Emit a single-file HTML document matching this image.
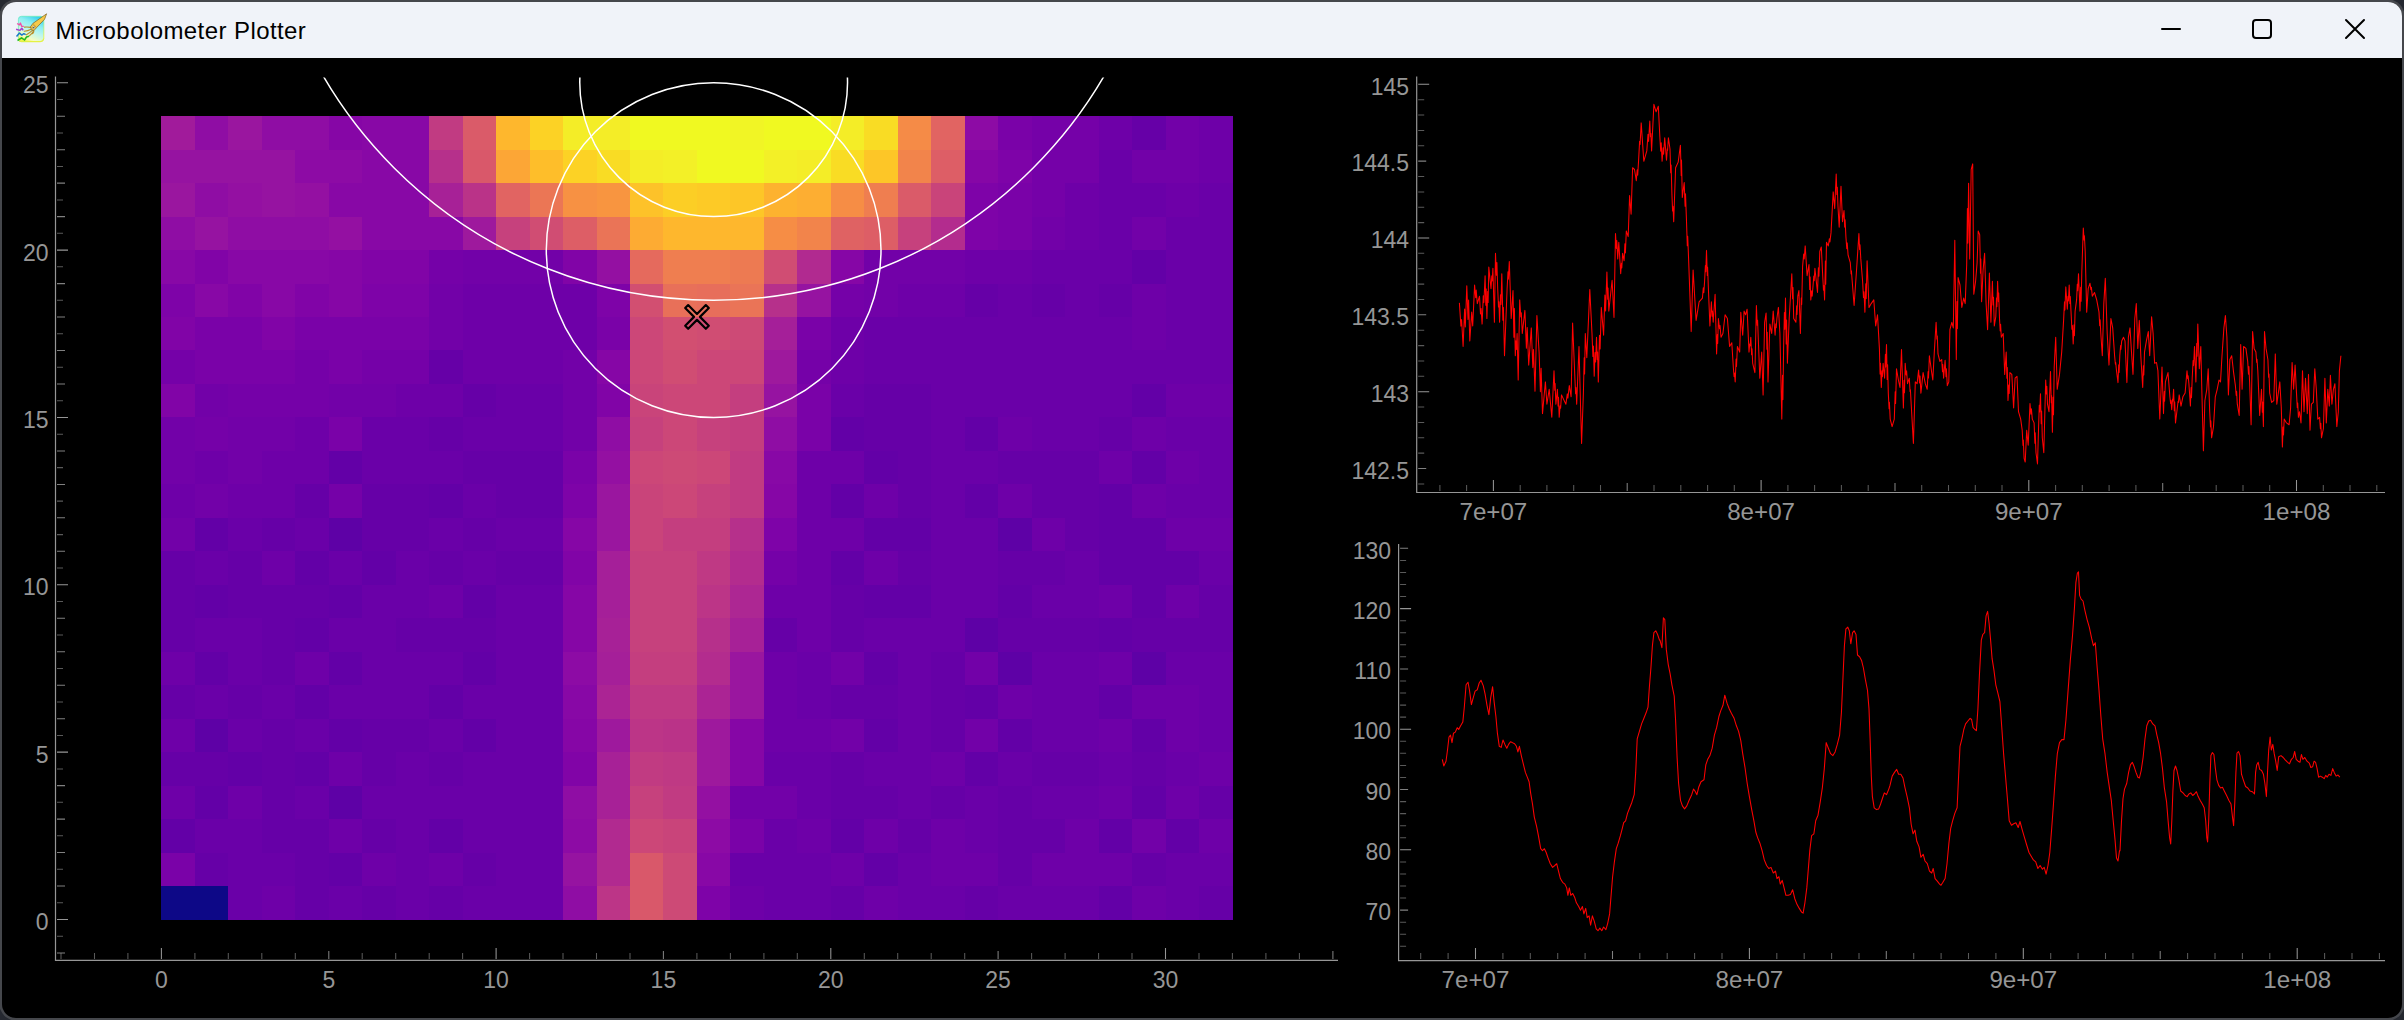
<!DOCTYPE html>
<html><head><meta charset="utf-8"><title>Microbolometer Plotter</title>
<style>
html,body{margin:0;padding:0}
body{width:2404px;height:1020px;overflow:hidden;background:#45474c;position:relative;font-family:"Liberation Sans",sans-serif}
.corner{position:absolute;width:11px;height:11px;background:#252830}
#win{position:absolute;left:2px;top:2px;width:2400px;height:1016px;border-radius:14px;background:#000;overflow:hidden;box-shadow:0 0 0 2.5px #45474c}
#title{position:absolute;left:0;top:0;width:2400px;height:56px;background:#f0f3f9}
#title .t{position:absolute;left:53.6px;top:-0.4px;height:56px;line-height:57px;font-size:24px;color:#000;white-space:nowrap;letter-spacing:0.42px}
svg{position:absolute;left:0;top:0}
svg text{font-family:"Liberation Sans",sans-serif;font-size:23px;fill:#969696}
</style></head><body>
<div class="corner" style="left:0;top:0"></div><div class="corner" style="right:0;top:0"></div>
<div class="corner" style="left:0;bottom:0"></div><div class="corner" style="right:0;bottom:0"></div>
<div id="win"><div id="title"><div class="t">Microbolometer Plotter</div></div></div>

<svg width="2404" height="1020" viewBox="0 0 2404 1020">
<defs><linearGradient id="ig" x1="0.75" y1="0" x2="0.3" y2="1"><stop offset="0" stop-color="#30cfec"/><stop offset="0.3" stop-color="#8deef2"/><stop offset="0.55" stop-color="#b9f6f0"/><stop offset="0.85" stop-color="#f6fcc4"/><stop offset="1" stop-color="#f0f64a"/></linearGradient>
<linearGradient id="ib" x1="0" y1="0" x2="0.6" y2="1"><stop offset="0" stop-color="#5fe9c8"/><stop offset="0.6" stop-color="#8ef0a0"/><stop offset="1" stop-color="#e6f23a"/></linearGradient></defs>
<g>
<rect x="18.4" y="16.3" width="25.4" height="25.4" rx="3.2" fill="url(#ig)" stroke="url(#ib)" stroke-width="0.8"/>
<path d="M18.6 40.6Q19 41.6 21 41.6H40Q43.4 41.6 43.6 38.5" fill="none" stroke="#e4f03a" stroke-width="0.9"/>
<path d="M24.5 27.1Q28 26.8 30.6 27.4M24.3 31.2Q28 31 30.6 29.6M26.4 34.8Q30 32.6 32.4 30.4M29.3 35.9Q32 33.6 33.4 31.2M32.7 33.6Q33.8 32.4 33.9 30.8" stroke="#b98f2a" stroke-width="1.15" fill="none" stroke-linecap="round"/>
<path d="M46.6 13.8L32.9 23.4L30.6 26.6L31.2 29.6L33.9 30.6L36.6 27.6L44.6 19.2Z" fill="#f7c948" stroke="#7d6220" stroke-width="0.7" stroke-linejoin="round"/>
<path d="M33 23.6L36.4 27.4" stroke="#9a7a28" stroke-width="0.5"/>
<ellipse cx="33.6" cy="27.4" rx="1.15" ry="1.35" transform="rotate(30 33.600 27.400)" fill="#f4f4f4" stroke="#6b5518" stroke-width="0.4"/>
<circle cx="33.500" cy="27.500" r="0.600" fill="#444"/>
<path d="M17.1 23.5L19.5 24.9L20.4 23.1L21.800 26.400L23.800 26.400" stroke="#f050a8" stroke-width="1.4" fill="none" stroke-linejoin="round"/>
<path d="M16.1 29.200L19.800 30.400L21.800 28.200L23.200 30.400" stroke="#a040d0" stroke-width="1.5" fill="none" stroke-linejoin="round"/>
<path d="M16.500 36.400L19.500 33.100L21.800 35.100L23.800 33.700L25.700 34.700" stroke="#1878c8" stroke-width="1.5" fill="none" stroke-linejoin="round"/>
<path d="M17.500 40.500L21.600 37.800L24.500 40L26.500 37L28.900 36.200" stroke="#20b820" stroke-width="1.5" fill="none" stroke-linejoin="round"/>
</g>

<g stroke="#000" stroke-width="2" fill="none" stroke-linecap="round"><path d="M2162 29H2180"/><rect x="2253" y="20" width="18" height="18" rx="3"/><path d="M2346 20L2364 38M2364 20L2346 38"/></g>
<g shape-rendering="crispEdges">
<rect x="161.40" y="116.20" width="33.77" height="33.77" fill="#a11b9b"/>
<rect x="194.87" y="116.20" width="33.77" height="33.77" fill="#8f0da4"/>
<rect x="228.34" y="116.20" width="33.77" height="33.77" fill="#9a169f"/>
<rect x="261.81" y="116.20" width="67.24" height="33.77" fill="#8f0da4"/>
<rect x="328.75" y="116.20" width="33.77" height="33.77" fill="#8606a6"/>
<rect x="362.22" y="116.20" width="67.24" height="33.77" fill="#8808a6"/>
<rect x="429.16" y="116.20" width="33.77" height="33.77" fill="#c13b82"/>
<rect x="462.63" y="116.20" width="33.77" height="33.77" fill="#da5b69"/>
<rect x="496.10" y="116.20" width="33.77" height="33.77" fill="#feb72d"/>
<rect x="529.57" y="116.20" width="33.77" height="33.77" fill="#fcd225"/>
<rect x="563.04" y="116.20" width="67.24" height="33.77" fill="#f4ed27"/>
<rect x="629.98" y="116.20" width="100.71" height="33.77" fill="#f0f921"/>
<rect x="730.39" y="116.20" width="33.77" height="33.77" fill="#f1f525"/>
<rect x="763.86" y="116.20" width="67.24" height="33.77" fill="#f0f921"/>
<rect x="830.80" y="116.20" width="33.77" height="33.77" fill="#f4ed27"/>
<rect x="864.27" y="116.20" width="33.77" height="33.77" fill="#f9dc24"/>
<rect x="897.74" y="116.20" width="33.77" height="33.77" fill="#f58b47"/>
<rect x="931.21" y="116.20" width="33.77" height="33.77" fill="#e16462"/>
<rect x="964.68" y="116.20" width="33.77" height="33.77" fill="#8d0ba5"/>
<rect x="998.15" y="116.20" width="33.77" height="33.77" fill="#7a02a8"/>
<rect x="1031.62" y="116.20" width="67.24" height="33.77" fill="#7501a8"/>
<rect x="1098.56" y="116.20" width="33.77" height="33.77" fill="#6e00a8"/>
<rect x="1132.03" y="116.20" width="33.77" height="33.77" fill="#6600a7"/>
<rect x="1165.50" y="116.20" width="33.77" height="33.77" fill="#7201a8"/>
<rect x="1198.97" y="116.20" width="33.77" height="33.77" fill="#6e00a8"/>
<rect x="161.40" y="149.67" width="134.18" height="33.77" fill="#9613a1"/>
<rect x="295.28" y="149.67" width="67.24" height="33.77" fill="#8d0ba5"/>
<rect x="362.22" y="149.67" width="67.24" height="33.77" fill="#8808a6"/>
<rect x="429.16" y="149.67" width="33.77" height="33.77" fill="#b6308b"/>
<rect x="462.63" y="149.67" width="33.77" height="33.77" fill="#d9586a"/>
<rect x="496.10" y="149.67" width="33.77" height="33.77" fill="#fca636"/>
<rect x="529.57" y="149.67" width="33.77" height="33.77" fill="#febe2a"/>
<rect x="563.04" y="149.67" width="33.77" height="33.77" fill="#fcd225"/>
<rect x="596.51" y="149.67" width="33.77" height="33.77" fill="#f9dc24"/>
<rect x="629.98" y="149.67" width="33.77" height="33.77" fill="#f4ed27"/>
<rect x="663.45" y="149.67" width="33.77" height="33.77" fill="#f3f027"/>
<rect x="696.92" y="149.67" width="67.24" height="33.77" fill="#f0f921"/>
<rect x="763.86" y="149.67" width="33.77" height="33.77" fill="#f3f027"/>
<rect x="797.33" y="149.67" width="33.77" height="33.77" fill="#f4ed27"/>
<rect x="830.80" y="149.67" width="33.77" height="33.77" fill="#f9dc24"/>
<rect x="864.27" y="149.67" width="33.77" height="33.77" fill="#fdc627"/>
<rect x="897.74" y="149.67" width="33.77" height="33.77" fill="#f2844b"/>
<rect x="931.21" y="149.67" width="33.77" height="33.77" fill="#dd5e66"/>
<rect x="964.68" y="149.67" width="33.77" height="33.77" fill="#8606a6"/>
<rect x="998.15" y="149.67" width="33.77" height="33.77" fill="#7e03a8"/>
<rect x="1031.62" y="149.67" width="67.24" height="33.77" fill="#7501a8"/>
<rect x="1098.56" y="149.67" width="33.77" height="33.77" fill="#6a00a8"/>
<rect x="1132.03" y="149.67" width="67.24" height="33.77" fill="#7201a8"/>
<rect x="1198.97" y="149.67" width="33.77" height="33.77" fill="#6e00a8"/>
<rect x="161.40" y="183.14" width="33.77" height="33.77" fill="#9a169f"/>
<rect x="194.87" y="183.14" width="33.77" height="33.77" fill="#8f0da4"/>
<rect x="228.34" y="183.14" width="33.77" height="33.77" fill="#9410a2"/>
<rect x="261.81" y="183.14" width="33.77" height="33.77" fill="#9613a1"/>
<rect x="295.28" y="183.14" width="33.77" height="33.77" fill="#9410a2"/>
<rect x="328.75" y="183.14" width="100.71" height="33.77" fill="#8808a6"/>
<rect x="429.16" y="183.14" width="33.77" height="33.77" fill="#a72197"/>
<rect x="462.63" y="183.14" width="33.77" height="33.77" fill="#ba3388"/>
<rect x="496.10" y="183.14" width="33.77" height="33.77" fill="#e16462"/>
<rect x="529.57" y="183.14" width="33.77" height="33.77" fill="#eb7655"/>
<rect x="563.04" y="183.14" width="33.77" height="33.77" fill="#f79143"/>
<rect x="596.51" y="183.14" width="33.77" height="33.77" fill="#f89540"/>
<rect x="629.98" y="183.14" width="33.77" height="33.77" fill="#fdc229"/>
<rect x="663.45" y="183.14" width="33.77" height="33.77" fill="#fcce25"/>
<rect x="696.92" y="183.14" width="33.77" height="33.77" fill="#fdca26"/>
<rect x="730.39" y="183.14" width="33.77" height="33.77" fill="#fdc627"/>
<rect x="763.86" y="183.14" width="33.77" height="33.77" fill="#fdb22f"/>
<rect x="797.33" y="183.14" width="33.77" height="33.77" fill="#fdae32"/>
<rect x="830.80" y="183.14" width="33.77" height="33.77" fill="#f68d45"/>
<rect x="864.27" y="183.14" width="33.77" height="33.77" fill="#ef7e50"/>
<rect x="897.74" y="183.14" width="33.77" height="33.77" fill="#da5b69"/>
<rect x="931.21" y="183.14" width="33.77" height="33.77" fill="#c9447a"/>
<rect x="964.68" y="183.14" width="33.77" height="33.77" fill="#7e03a8"/>
<rect x="998.15" y="183.14" width="33.77" height="33.77" fill="#7a02a8"/>
<rect x="1031.62" y="183.14" width="33.77" height="33.77" fill="#7501a8"/>
<rect x="1065.09" y="183.14" width="33.77" height="33.77" fill="#6e00a8"/>
<rect x="1098.56" y="183.14" width="67.24" height="33.77" fill="#6a00a8"/>
<rect x="1165.50" y="183.14" width="33.77" height="33.77" fill="#6e00a8"/>
<rect x="1198.97" y="183.14" width="33.77" height="33.77" fill="#6a00a8"/>
<rect x="161.40" y="216.61" width="33.77" height="33.77" fill="#8f0da4"/>
<rect x="194.87" y="216.61" width="33.77" height="33.77" fill="#9613a1"/>
<rect x="228.34" y="216.61" width="100.71" height="33.77" fill="#8f0da4"/>
<rect x="328.75" y="216.61" width="33.77" height="33.77" fill="#9410a2"/>
<rect x="362.22" y="216.61" width="100.71" height="33.77" fill="#8808a6"/>
<rect x="462.63" y="216.61" width="33.77" height="33.77" fill="#9e199d"/>
<rect x="496.10" y="216.61" width="33.77" height="33.77" fill="#c6417d"/>
<rect x="529.57" y="216.61" width="33.77" height="33.77" fill="#d04d73"/>
<rect x="563.04" y="216.61" width="33.77" height="33.77" fill="#dd5e66"/>
<rect x="596.51" y="216.61" width="33.77" height="33.77" fill="#ea7457"/>
<rect x="629.98" y="216.61" width="33.77" height="33.77" fill="#fdab33"/>
<rect x="663.45" y="216.61" width="100.71" height="33.77" fill="#feb72d"/>
<rect x="763.86" y="216.61" width="33.77" height="33.77" fill="#f68d45"/>
<rect x="797.33" y="216.61" width="33.77" height="33.77" fill="#f2844b"/>
<rect x="830.80" y="216.61" width="33.77" height="33.77" fill="#df6263"/>
<rect x="864.27" y="216.61" width="33.77" height="33.77" fill="#dd5e66"/>
<rect x="897.74" y="216.61" width="33.77" height="33.77" fill="#c6417d"/>
<rect x="931.21" y="216.61" width="33.77" height="33.77" fill="#b32c8e"/>
<rect x="964.68" y="216.61" width="33.77" height="33.77" fill="#7e03a8"/>
<rect x="998.15" y="216.61" width="33.77" height="33.77" fill="#7a02a8"/>
<rect x="1031.62" y="216.61" width="33.77" height="33.77" fill="#7201a8"/>
<rect x="1065.09" y="216.61" width="33.77" height="33.77" fill="#6e00a8"/>
<rect x="1098.56" y="216.61" width="33.77" height="33.77" fill="#6a00a8"/>
<rect x="1132.03" y="216.61" width="33.77" height="33.77" fill="#7201a8"/>
<rect x="1165.50" y="216.61" width="67.24" height="33.77" fill="#6a00a8"/>
<rect x="161.40" y="250.08" width="33.77" height="33.77" fill="#8808a6"/>
<rect x="194.87" y="250.08" width="33.77" height="33.77" fill="#8104a7"/>
<rect x="228.34" y="250.08" width="100.71" height="33.77" fill="#8808a6"/>
<rect x="328.75" y="250.08" width="33.77" height="33.77" fill="#8606a6"/>
<rect x="362.22" y="250.08" width="67.24" height="33.77" fill="#8104a7"/>
<rect x="429.16" y="250.08" width="33.77" height="33.77" fill="#7501a8"/>
<rect x="462.63" y="250.08" width="100.71" height="33.77" fill="#7201a8"/>
<rect x="563.04" y="250.08" width="33.77" height="33.77" fill="#8104a7"/>
<rect x="596.51" y="250.08" width="33.77" height="33.77" fill="#9410a2"/>
<rect x="629.98" y="250.08" width="33.77" height="33.77" fill="#e56a5d"/>
<rect x="663.45" y="250.08" width="67.24" height="33.77" fill="#ef7e50"/>
<rect x="730.39" y="250.08" width="33.77" height="33.77" fill="#ed7a52"/>
<rect x="763.86" y="250.08" width="33.77" height="33.77" fill="#d04d73"/>
<rect x="797.33" y="250.08" width="33.77" height="33.77" fill="#b12a90"/>
<rect x="830.80" y="250.08" width="33.77" height="33.77" fill="#8606a6"/>
<rect x="864.27" y="250.08" width="100.71" height="33.77" fill="#7201a8"/>
<rect x="964.68" y="250.08" width="67.24" height="33.77" fill="#6e00a8"/>
<rect x="1031.62" y="250.08" width="100.71" height="33.77" fill="#6a00a8"/>
<rect x="1132.03" y="250.08" width="33.77" height="33.77" fill="#6300a7"/>
<rect x="1165.50" y="250.08" width="67.24" height="33.77" fill="#6a00a8"/>
<rect x="161.40" y="283.55" width="33.77" height="33.77" fill="#7e03a8"/>
<rect x="194.87" y="283.55" width="33.77" height="33.77" fill="#8808a6"/>
<rect x="228.34" y="283.55" width="33.77" height="33.77" fill="#8104a7"/>
<rect x="261.81" y="283.55" width="33.77" height="33.77" fill="#8808a6"/>
<rect x="295.28" y="283.55" width="33.77" height="33.77" fill="#8104a7"/>
<rect x="328.75" y="283.55" width="33.77" height="33.77" fill="#8606a6"/>
<rect x="362.22" y="283.55" width="67.24" height="33.77" fill="#7e03a8"/>
<rect x="429.16" y="283.55" width="33.77" height="33.77" fill="#7201a8"/>
<rect x="462.63" y="283.55" width="134.18" height="33.77" fill="#6e00a8"/>
<rect x="596.51" y="283.55" width="33.77" height="33.77" fill="#7e03a8"/>
<rect x="629.98" y="283.55" width="33.77" height="33.77" fill="#d24f71"/>
<rect x="663.45" y="283.55" width="33.77" height="33.77" fill="#e87059"/>
<rect x="696.92" y="283.55" width="33.77" height="33.77" fill="#e76e5b"/>
<rect x="730.39" y="283.55" width="33.77" height="33.77" fill="#ea7457"/>
<rect x="763.86" y="283.55" width="33.77" height="33.77" fill="#b6308b"/>
<rect x="797.33" y="283.55" width="33.77" height="33.77" fill="#9613a1"/>
<rect x="830.80" y="283.55" width="33.77" height="33.77" fill="#7501a8"/>
<rect x="864.27" y="283.55" width="33.77" height="33.77" fill="#7201a8"/>
<rect x="897.74" y="283.55" width="67.24" height="33.77" fill="#6e00a8"/>
<rect x="964.68" y="283.55" width="33.77" height="33.77" fill="#6600a7"/>
<rect x="998.15" y="283.55" width="33.77" height="33.77" fill="#6a00a8"/>
<rect x="1031.62" y="283.55" width="33.77" height="33.77" fill="#6600a7"/>
<rect x="1065.09" y="283.55" width="33.77" height="33.77" fill="#6a00a8"/>
<rect x="1098.56" y="283.55" width="33.77" height="33.77" fill="#6600a7"/>
<rect x="1132.03" y="283.55" width="33.77" height="33.77" fill="#6e00a8"/>
<rect x="1165.50" y="283.55" width="67.24" height="33.77" fill="#6a00a8"/>
<rect x="161.40" y="317.02" width="33.77" height="33.77" fill="#8104a7"/>
<rect x="194.87" y="317.02" width="67.24" height="33.77" fill="#7a02a8"/>
<rect x="261.81" y="317.02" width="33.77" height="33.77" fill="#8104a7"/>
<rect x="295.28" y="317.02" width="134.18" height="33.77" fill="#7a02a8"/>
<rect x="429.16" y="317.02" width="33.77" height="33.77" fill="#7201a8"/>
<rect x="462.63" y="317.02" width="134.18" height="33.77" fill="#6e00a8"/>
<rect x="596.51" y="317.02" width="33.77" height="33.77" fill="#7a02a8"/>
<rect x="629.98" y="317.02" width="33.77" height="33.77" fill="#cc4778"/>
<rect x="663.45" y="317.02" width="33.77" height="33.77" fill="#d24f71"/>
<rect x="696.92" y="317.02" width="33.77" height="33.77" fill="#d04d73"/>
<rect x="730.39" y="317.02" width="33.77" height="33.77" fill="#cd4a76"/>
<rect x="763.86" y="317.02" width="33.77" height="33.77" fill="#a51f99"/>
<rect x="797.33" y="317.02" width="33.77" height="33.77" fill="#7a02a8"/>
<rect x="830.80" y="317.02" width="33.77" height="33.77" fill="#6e00a8"/>
<rect x="864.27" y="317.02" width="268.06" height="33.77" fill="#6a00a8"/>
<rect x="1132.03" y="317.02" width="33.77" height="33.77" fill="#6e00a8"/>
<rect x="1165.50" y="317.02" width="67.24" height="33.77" fill="#6a00a8"/>
<rect x="161.40" y="350.49" width="33.77" height="33.77" fill="#7501a8"/>
<rect x="194.87" y="350.49" width="100.71" height="33.77" fill="#7a02a8"/>
<rect x="295.28" y="350.49" width="33.77" height="33.77" fill="#7501a8"/>
<rect x="328.75" y="350.49" width="33.77" height="33.77" fill="#7a02a8"/>
<rect x="362.22" y="350.49" width="67.24" height="33.77" fill="#7501a8"/>
<rect x="429.16" y="350.49" width="33.77" height="33.77" fill="#6600a7"/>
<rect x="462.63" y="350.49" width="100.71" height="33.77" fill="#6e00a8"/>
<rect x="563.04" y="350.49" width="33.77" height="33.77" fill="#7201a8"/>
<rect x="596.51" y="350.49" width="33.77" height="33.77" fill="#8606a6"/>
<rect x="629.98" y="350.49" width="33.77" height="33.77" fill="#cc4778"/>
<rect x="663.45" y="350.49" width="33.77" height="33.77" fill="#d04d73"/>
<rect x="696.92" y="350.49" width="67.24" height="33.77" fill="#cc4778"/>
<rect x="763.86" y="350.49" width="33.77" height="33.77" fill="#9e199d"/>
<rect x="797.33" y="350.49" width="33.77" height="33.77" fill="#7501a8"/>
<rect x="830.80" y="350.49" width="33.77" height="33.77" fill="#6e00a8"/>
<rect x="864.27" y="350.49" width="368.47" height="33.77" fill="#6a00a8"/>
<rect x="161.40" y="383.96" width="33.77" height="33.77" fill="#8104a7"/>
<rect x="194.87" y="383.96" width="33.77" height="33.77" fill="#7201a8"/>
<rect x="228.34" y="383.96" width="100.71" height="33.77" fill="#7501a8"/>
<rect x="328.75" y="383.96" width="67.24" height="33.77" fill="#7201a8"/>
<rect x="395.69" y="383.96" width="67.24" height="33.77" fill="#6e00a8"/>
<rect x="462.63" y="383.96" width="33.77" height="33.77" fill="#6600a7"/>
<rect x="496.10" y="383.96" width="67.24" height="33.77" fill="#6a00a8"/>
<rect x="563.04" y="383.96" width="33.77" height="33.77" fill="#7201a8"/>
<rect x="596.51" y="383.96" width="33.77" height="33.77" fill="#8104a7"/>
<rect x="629.98" y="383.96" width="33.77" height="33.77" fill="#c9447a"/>
<rect x="663.45" y="383.96" width="67.24" height="33.77" fill="#cc4778"/>
<rect x="730.39" y="383.96" width="33.77" height="33.77" fill="#c43e7f"/>
<rect x="763.86" y="383.96" width="33.77" height="33.77" fill="#9613a1"/>
<rect x="797.33" y="383.96" width="33.77" height="33.77" fill="#7a02a8"/>
<rect x="830.80" y="383.96" width="33.77" height="33.77" fill="#6a00a8"/>
<rect x="864.27" y="383.96" width="67.24" height="33.77" fill="#6600a7"/>
<rect x="931.21" y="383.96" width="201.12" height="33.77" fill="#6a00a8"/>
<rect x="1132.03" y="383.96" width="33.77" height="33.77" fill="#6300a7"/>
<rect x="1165.50" y="383.96" width="67.24" height="33.77" fill="#6e00a8"/>
<rect x="161.40" y="417.43" width="33.77" height="33.77" fill="#7201a8"/>
<rect x="194.87" y="417.43" width="33.77" height="33.77" fill="#7501a8"/>
<rect x="228.34" y="417.43" width="67.24" height="33.77" fill="#7201a8"/>
<rect x="295.28" y="417.43" width="33.77" height="33.77" fill="#6e00a8"/>
<rect x="328.75" y="417.43" width="33.77" height="33.77" fill="#7a02a8"/>
<rect x="362.22" y="417.43" width="67.24" height="33.77" fill="#6a00a8"/>
<rect x="429.16" y="417.43" width="33.77" height="33.77" fill="#6600a7"/>
<rect x="462.63" y="417.43" width="100.71" height="33.77" fill="#6a00a8"/>
<rect x="563.04" y="417.43" width="33.77" height="33.77" fill="#7201a8"/>
<rect x="596.51" y="417.43" width="33.77" height="33.77" fill="#8f0da4"/>
<rect x="629.98" y="417.43" width="33.77" height="33.77" fill="#c6417d"/>
<rect x="663.45" y="417.43" width="33.77" height="33.77" fill="#cc4778"/>
<rect x="696.92" y="417.43" width="33.77" height="33.77" fill="#c6417d"/>
<rect x="730.39" y="417.43" width="33.77" height="33.77" fill="#c43e7f"/>
<rect x="763.86" y="417.43" width="33.77" height="33.77" fill="#8f0da4"/>
<rect x="797.33" y="417.43" width="33.77" height="33.77" fill="#7a02a8"/>
<rect x="830.80" y="417.43" width="33.77" height="33.77" fill="#6300a7"/>
<rect x="864.27" y="417.43" width="67.24" height="33.77" fill="#6600a7"/>
<rect x="931.21" y="417.43" width="33.77" height="33.77" fill="#6a00a8"/>
<rect x="964.68" y="417.43" width="33.77" height="33.77" fill="#6300a7"/>
<rect x="998.15" y="417.43" width="33.77" height="33.77" fill="#6e00a8"/>
<rect x="1031.62" y="417.43" width="67.24" height="33.77" fill="#6a00a8"/>
<rect x="1098.56" y="417.43" width="33.77" height="33.77" fill="#6600a7"/>
<rect x="1132.03" y="417.43" width="33.77" height="33.77" fill="#6e00a8"/>
<rect x="1165.50" y="417.43" width="67.24" height="33.77" fill="#6a00a8"/>
<rect x="161.40" y="450.90" width="33.77" height="33.77" fill="#7201a8"/>
<rect x="194.87" y="450.90" width="33.77" height="33.77" fill="#6e00a8"/>
<rect x="228.34" y="450.90" width="33.77" height="33.77" fill="#7201a8"/>
<rect x="261.81" y="450.90" width="67.24" height="33.77" fill="#6e00a8"/>
<rect x="328.75" y="450.90" width="33.77" height="33.77" fill="#6300a7"/>
<rect x="362.22" y="450.90" width="100.71" height="33.77" fill="#6a00a8"/>
<rect x="462.63" y="450.90" width="100.71" height="33.77" fill="#6600a7"/>
<rect x="563.04" y="450.90" width="33.77" height="33.77" fill="#7a02a8"/>
<rect x="596.51" y="450.90" width="33.77" height="33.77" fill="#9410a2"/>
<rect x="629.98" y="450.90" width="33.77" height="33.77" fill="#cc4778"/>
<rect x="663.45" y="450.90" width="33.77" height="33.77" fill="#cd4a76"/>
<rect x="696.92" y="450.90" width="33.77" height="33.77" fill="#cc4778"/>
<rect x="730.39" y="450.90" width="33.77" height="33.77" fill="#c13b82"/>
<rect x="763.86" y="450.90" width="33.77" height="33.77" fill="#8808a6"/>
<rect x="797.33" y="450.90" width="67.24" height="33.77" fill="#6e00a8"/>
<rect x="864.27" y="450.90" width="33.77" height="33.77" fill="#6300a7"/>
<rect x="897.74" y="450.90" width="33.77" height="33.77" fill="#6600a7"/>
<rect x="931.21" y="450.90" width="67.24" height="33.77" fill="#6a00a8"/>
<rect x="998.15" y="450.90" width="100.71" height="33.77" fill="#6600a7"/>
<rect x="1098.56" y="450.90" width="33.77" height="33.77" fill="#6e00a8"/>
<rect x="1132.03" y="450.90" width="33.77" height="33.77" fill="#6300a7"/>
<rect x="1165.50" y="450.90" width="33.77" height="33.77" fill="#6e00a8"/>
<rect x="1198.97" y="450.90" width="33.77" height="33.77" fill="#6a00a8"/>
<rect x="161.40" y="484.37" width="33.77" height="33.77" fill="#6e00a8"/>
<rect x="194.87" y="484.37" width="33.77" height="33.77" fill="#7201a8"/>
<rect x="228.34" y="484.37" width="67.24" height="33.77" fill="#6e00a8"/>
<rect x="295.28" y="484.37" width="33.77" height="33.77" fill="#6600a7"/>
<rect x="328.75" y="484.37" width="33.77" height="33.77" fill="#7501a8"/>
<rect x="362.22" y="484.37" width="67.24" height="33.77" fill="#6600a7"/>
<rect x="429.16" y="484.37" width="33.77" height="33.77" fill="#6300a7"/>
<rect x="462.63" y="484.37" width="33.77" height="33.77" fill="#6a00a8"/>
<rect x="496.10" y="484.37" width="67.24" height="33.77" fill="#6600a7"/>
<rect x="563.04" y="484.37" width="33.77" height="33.77" fill="#7e03a8"/>
<rect x="596.51" y="484.37" width="33.77" height="33.77" fill="#9a169f"/>
<rect x="629.98" y="484.37" width="33.77" height="33.77" fill="#c9447a"/>
<rect x="663.45" y="484.37" width="33.77" height="33.77" fill="#cc4778"/>
<rect x="696.92" y="484.37" width="33.77" height="33.77" fill="#c6417d"/>
<rect x="730.39" y="484.37" width="33.77" height="33.77" fill="#c13b82"/>
<rect x="763.86" y="484.37" width="33.77" height="33.77" fill="#8606a6"/>
<rect x="797.33" y="484.37" width="33.77" height="33.77" fill="#6e00a8"/>
<rect x="830.80" y="484.37" width="33.77" height="33.77" fill="#6300a7"/>
<rect x="864.27" y="484.37" width="33.77" height="33.77" fill="#6e00a8"/>
<rect x="897.74" y="484.37" width="33.77" height="33.77" fill="#6600a7"/>
<rect x="931.21" y="484.37" width="33.77" height="33.77" fill="#6a00a8"/>
<rect x="964.68" y="484.37" width="33.77" height="33.77" fill="#6300a7"/>
<rect x="998.15" y="484.37" width="33.77" height="33.77" fill="#6e00a8"/>
<rect x="1031.62" y="484.37" width="67.24" height="33.77" fill="#6600a7"/>
<rect x="1098.56" y="484.37" width="33.77" height="33.77" fill="#6300a7"/>
<rect x="1132.03" y="484.37" width="33.77" height="33.77" fill="#6e00a8"/>
<rect x="1165.50" y="484.37" width="67.24" height="33.77" fill="#6a00a8"/>
<rect x="161.40" y="517.84" width="33.77" height="33.77" fill="#7201a8"/>
<rect x="194.87" y="517.84" width="33.77" height="33.77" fill="#6300a7"/>
<rect x="228.34" y="517.84" width="33.77" height="33.77" fill="#6a00a8"/>
<rect x="261.81" y="517.84" width="33.77" height="33.77" fill="#6600a7"/>
<rect x="295.28" y="517.84" width="33.77" height="33.77" fill="#6a00a8"/>
<rect x="328.75" y="517.84" width="33.77" height="33.77" fill="#5e01a6"/>
<rect x="362.22" y="517.84" width="67.24" height="33.77" fill="#6600a7"/>
<rect x="429.16" y="517.84" width="33.77" height="33.77" fill="#6a00a8"/>
<rect x="462.63" y="517.84" width="33.77" height="33.77" fill="#6600a7"/>
<rect x="496.10" y="517.84" width="67.24" height="33.77" fill="#6a00a8"/>
<rect x="563.04" y="517.84" width="33.77" height="33.77" fill="#8606a6"/>
<rect x="596.51" y="517.84" width="33.77" height="33.77" fill="#9a169f"/>
<rect x="629.98" y="517.84" width="33.77" height="33.77" fill="#c9447a"/>
<rect x="663.45" y="517.84" width="67.24" height="33.77" fill="#c43e7f"/>
<rect x="730.39" y="517.84" width="33.77" height="33.77" fill="#b6308b"/>
<rect x="763.86" y="517.84" width="33.77" height="33.77" fill="#7e03a8"/>
<rect x="797.33" y="517.84" width="67.24" height="33.77" fill="#6e00a8"/>
<rect x="864.27" y="517.84" width="67.24" height="33.77" fill="#6300a7"/>
<rect x="931.21" y="517.84" width="67.24" height="33.77" fill="#6a00a8"/>
<rect x="998.15" y="517.84" width="33.77" height="33.77" fill="#5e01a6"/>
<rect x="1031.62" y="517.84" width="33.77" height="33.77" fill="#6e00a8"/>
<rect x="1065.09" y="517.84" width="33.77" height="33.77" fill="#6600a7"/>
<rect x="1098.56" y="517.84" width="67.24" height="33.77" fill="#6300a7"/>
<rect x="1165.50" y="517.84" width="67.24" height="33.77" fill="#6e00a8"/>
<rect x="161.40" y="551.31" width="33.77" height="33.77" fill="#6600a7"/>
<rect x="194.87" y="551.31" width="33.77" height="33.77" fill="#6a00a8"/>
<rect x="228.34" y="551.31" width="33.77" height="33.77" fill="#6600a7"/>
<rect x="261.81" y="551.31" width="33.77" height="33.77" fill="#6e00a8"/>
<rect x="295.28" y="551.31" width="33.77" height="33.77" fill="#6300a7"/>
<rect x="328.75" y="551.31" width="33.77" height="33.77" fill="#6a00a8"/>
<rect x="362.22" y="551.31" width="33.77" height="33.77" fill="#6300a7"/>
<rect x="395.69" y="551.31" width="33.77" height="33.77" fill="#6a00a8"/>
<rect x="429.16" y="551.31" width="33.77" height="33.77" fill="#6600a7"/>
<rect x="462.63" y="551.31" width="33.77" height="33.77" fill="#6a00a8"/>
<rect x="496.10" y="551.31" width="67.24" height="33.77" fill="#6600a7"/>
<rect x="563.04" y="551.31" width="33.77" height="33.77" fill="#8104a7"/>
<rect x="596.51" y="551.31" width="33.77" height="33.77" fill="#a51f99"/>
<rect x="629.98" y="551.31" width="67.24" height="33.77" fill="#c6417d"/>
<rect x="696.92" y="551.31" width="33.77" height="33.77" fill="#bf3984"/>
<rect x="730.39" y="551.31" width="33.77" height="33.77" fill="#b32c8e"/>
<rect x="763.86" y="551.31" width="33.77" height="33.77" fill="#7501a8"/>
<rect x="797.33" y="551.31" width="33.77" height="33.77" fill="#6e00a8"/>
<rect x="830.80" y="551.31" width="33.77" height="33.77" fill="#6300a7"/>
<rect x="864.27" y="551.31" width="33.77" height="33.77" fill="#6e00a8"/>
<rect x="897.74" y="551.31" width="33.77" height="33.77" fill="#6600a7"/>
<rect x="931.21" y="551.31" width="67.24" height="33.77" fill="#6a00a8"/>
<rect x="998.15" y="551.31" width="67.24" height="33.77" fill="#6600a7"/>
<rect x="1065.09" y="551.31" width="33.77" height="33.77" fill="#6a00a8"/>
<rect x="1098.56" y="551.31" width="100.71" height="33.77" fill="#6300a7"/>
<rect x="1198.97" y="551.31" width="33.77" height="33.77" fill="#6a00a8"/>
<rect x="161.40" y="584.78" width="33.77" height="33.77" fill="#6600a7"/>
<rect x="194.87" y="584.78" width="33.77" height="33.77" fill="#6300a7"/>
<rect x="228.34" y="584.78" width="100.71" height="33.77" fill="#6600a7"/>
<rect x="328.75" y="584.78" width="33.77" height="33.77" fill="#6300a7"/>
<rect x="362.22" y="584.78" width="67.24" height="33.77" fill="#6a00a8"/>
<rect x="429.16" y="584.78" width="33.77" height="33.77" fill="#6e00a8"/>
<rect x="462.63" y="584.78" width="33.77" height="33.77" fill="#6300a7"/>
<rect x="496.10" y="584.78" width="67.24" height="33.77" fill="#6a00a8"/>
<rect x="563.04" y="584.78" width="33.77" height="33.77" fill="#8606a6"/>
<rect x="596.51" y="584.78" width="33.77" height="33.77" fill="#a51f99"/>
<rect x="629.98" y="584.78" width="67.24" height="33.77" fill="#c6417d"/>
<rect x="696.92" y="584.78" width="33.77" height="33.77" fill="#bc3587"/>
<rect x="730.39" y="584.78" width="33.77" height="33.77" fill="#ad2793"/>
<rect x="763.86" y="584.78" width="67.24" height="33.77" fill="#6e00a8"/>
<rect x="830.80" y="584.78" width="33.77" height="33.77" fill="#6600a7"/>
<rect x="864.27" y="584.78" width="67.24" height="33.77" fill="#6300a7"/>
<rect x="931.21" y="584.78" width="67.24" height="33.77" fill="#6a00a8"/>
<rect x="998.15" y="584.78" width="33.77" height="33.77" fill="#6300a7"/>
<rect x="1031.62" y="584.78" width="67.24" height="33.77" fill="#6a00a8"/>
<rect x="1098.56" y="584.78" width="33.77" height="33.77" fill="#6e00a8"/>
<rect x="1132.03" y="584.78" width="33.77" height="33.77" fill="#6300a7"/>
<rect x="1165.50" y="584.78" width="33.77" height="33.77" fill="#6e00a8"/>
<rect x="1198.97" y="584.78" width="33.77" height="33.77" fill="#6600a7"/>
<rect x="161.40" y="618.25" width="33.77" height="33.77" fill="#6600a7"/>
<rect x="194.87" y="618.25" width="67.24" height="33.77" fill="#6a00a8"/>
<rect x="261.81" y="618.25" width="33.77" height="33.77" fill="#6600a7"/>
<rect x="295.28" y="618.25" width="33.77" height="33.77" fill="#6300a7"/>
<rect x="328.75" y="618.25" width="67.24" height="33.77" fill="#6a00a8"/>
<rect x="395.69" y="618.25" width="100.71" height="33.77" fill="#6600a7"/>
<rect x="496.10" y="618.25" width="67.24" height="33.77" fill="#6a00a8"/>
<rect x="563.04" y="618.25" width="33.77" height="33.77" fill="#8606a6"/>
<rect x="596.51" y="618.25" width="33.77" height="33.77" fill="#a72197"/>
<rect x="629.98" y="618.25" width="67.24" height="33.77" fill="#c6417d"/>
<rect x="696.92" y="618.25" width="33.77" height="33.77" fill="#b6308b"/>
<rect x="730.39" y="618.25" width="33.77" height="33.77" fill="#a72197"/>
<rect x="763.86" y="618.25" width="33.77" height="33.77" fill="#6600a7"/>
<rect x="797.33" y="618.25" width="33.77" height="33.77" fill="#6e00a8"/>
<rect x="830.80" y="618.25" width="33.77" height="33.77" fill="#6600a7"/>
<rect x="864.27" y="618.25" width="100.71" height="33.77" fill="#6a00a8"/>
<rect x="964.68" y="618.25" width="33.77" height="33.77" fill="#5e01a6"/>
<rect x="998.15" y="618.25" width="100.71" height="33.77" fill="#6600a7"/>
<rect x="1098.56" y="618.25" width="33.77" height="33.77" fill="#6300a7"/>
<rect x="1132.03" y="618.25" width="100.71" height="33.77" fill="#6600a7"/>
<rect x="161.40" y="651.72" width="33.77" height="33.77" fill="#6e00a8"/>
<rect x="194.87" y="651.72" width="33.77" height="33.77" fill="#6300a7"/>
<rect x="228.34" y="651.72" width="33.77" height="33.77" fill="#6a00a8"/>
<rect x="261.81" y="651.72" width="33.77" height="33.77" fill="#6600a7"/>
<rect x="295.28" y="651.72" width="33.77" height="33.77" fill="#6e00a8"/>
<rect x="328.75" y="651.72" width="33.77" height="33.77" fill="#6300a7"/>
<rect x="362.22" y="651.72" width="100.71" height="33.77" fill="#6a00a8"/>
<rect x="462.63" y="651.72" width="33.77" height="33.77" fill="#6300a7"/>
<rect x="496.10" y="651.72" width="67.24" height="33.77" fill="#6a00a8"/>
<rect x="563.04" y="651.72" width="33.77" height="33.77" fill="#8d0ba5"/>
<rect x="596.51" y="651.72" width="33.77" height="33.77" fill="#a51f99"/>
<rect x="629.98" y="651.72" width="67.24" height="33.77" fill="#c43e7f"/>
<rect x="696.92" y="651.72" width="33.77" height="33.77" fill="#b32c8e"/>
<rect x="730.39" y="651.72" width="33.77" height="33.77" fill="#9a169f"/>
<rect x="763.86" y="651.72" width="33.77" height="33.77" fill="#6e00a8"/>
<rect x="797.33" y="651.72" width="33.77" height="33.77" fill="#6a00a8"/>
<rect x="830.80" y="651.72" width="33.77" height="33.77" fill="#7201a8"/>
<rect x="864.27" y="651.72" width="33.77" height="33.77" fill="#6300a7"/>
<rect x="897.74" y="651.72" width="33.77" height="33.77" fill="#6a00a8"/>
<rect x="931.21" y="651.72" width="33.77" height="33.77" fill="#6600a7"/>
<rect x="964.68" y="651.72" width="33.77" height="33.77" fill="#7201a8"/>
<rect x="998.15" y="651.72" width="33.77" height="33.77" fill="#5e01a6"/>
<rect x="1031.62" y="651.72" width="67.24" height="33.77" fill="#6a00a8"/>
<rect x="1098.56" y="651.72" width="33.77" height="33.77" fill="#6e00a8"/>
<rect x="1132.03" y="651.72" width="33.77" height="33.77" fill="#5e01a6"/>
<rect x="1165.50" y="651.72" width="67.24" height="33.77" fill="#6a00a8"/>
<rect x="161.40" y="685.19" width="33.77" height="33.77" fill="#6600a7"/>
<rect x="194.87" y="685.19" width="33.77" height="33.77" fill="#6a00a8"/>
<rect x="228.34" y="685.19" width="33.77" height="33.77" fill="#6600a7"/>
<rect x="261.81" y="685.19" width="33.77" height="33.77" fill="#6a00a8"/>
<rect x="295.28" y="685.19" width="33.77" height="33.77" fill="#6300a7"/>
<rect x="328.75" y="685.19" width="100.71" height="33.77" fill="#6a00a8"/>
<rect x="429.16" y="685.19" width="33.77" height="33.77" fill="#6300a7"/>
<rect x="462.63" y="685.19" width="100.71" height="33.77" fill="#6a00a8"/>
<rect x="563.04" y="685.19" width="33.77" height="33.77" fill="#8808a6"/>
<rect x="596.51" y="685.19" width="33.77" height="33.77" fill="#ab2494"/>
<rect x="629.98" y="685.19" width="67.24" height="33.77" fill="#bf3984"/>
<rect x="696.92" y="685.19" width="33.77" height="33.77" fill="#ab2494"/>
<rect x="730.39" y="685.19" width="33.77" height="33.77" fill="#9a169f"/>
<rect x="763.86" y="685.19" width="33.77" height="33.77" fill="#6e00a8"/>
<rect x="797.33" y="685.19" width="33.77" height="33.77" fill="#6a00a8"/>
<rect x="830.80" y="685.19" width="67.24" height="33.77" fill="#6600a7"/>
<rect x="897.74" y="685.19" width="33.77" height="33.77" fill="#6a00a8"/>
<rect x="931.21" y="685.19" width="33.77" height="33.77" fill="#6600a7"/>
<rect x="964.68" y="685.19" width="33.77" height="33.77" fill="#6300a7"/>
<rect x="998.15" y="685.19" width="33.77" height="33.77" fill="#6e00a8"/>
<rect x="1031.62" y="685.19" width="67.24" height="33.77" fill="#6a00a8"/>
<rect x="1098.56" y="685.19" width="33.77" height="33.77" fill="#6300a7"/>
<rect x="1132.03" y="685.19" width="67.24" height="33.77" fill="#6e00a8"/>
<rect x="1198.97" y="685.19" width="33.77" height="33.77" fill="#6a00a8"/>
<rect x="161.40" y="718.66" width="33.77" height="33.77" fill="#6e00a8"/>
<rect x="194.87" y="718.66" width="33.77" height="33.77" fill="#5e01a6"/>
<rect x="228.34" y="718.66" width="33.77" height="33.77" fill="#6a00a8"/>
<rect x="261.81" y="718.66" width="33.77" height="33.77" fill="#6600a7"/>
<rect x="295.28" y="718.66" width="33.77" height="33.77" fill="#6a00a8"/>
<rect x="328.75" y="718.66" width="33.77" height="33.77" fill="#6300a7"/>
<rect x="362.22" y="718.66" width="67.24" height="33.77" fill="#6600a7"/>
<rect x="429.16" y="718.66" width="33.77" height="33.77" fill="#6a00a8"/>
<rect x="462.63" y="718.66" width="33.77" height="33.77" fill="#6300a7"/>
<rect x="496.10" y="718.66" width="67.24" height="33.77" fill="#6a00a8"/>
<rect x="563.04" y="718.66" width="33.77" height="33.77" fill="#8606a6"/>
<rect x="596.51" y="718.66" width="33.77" height="33.77" fill="#9e199d"/>
<rect x="629.98" y="718.66" width="33.77" height="33.77" fill="#bc3587"/>
<rect x="663.45" y="718.66" width="33.77" height="33.77" fill="#ba3388"/>
<rect x="696.92" y="718.66" width="33.77" height="33.77" fill="#9e199d"/>
<rect x="730.39" y="718.66" width="33.77" height="33.77" fill="#8606a6"/>
<rect x="763.86" y="718.66" width="67.24" height="33.77" fill="#6e00a8"/>
<rect x="830.80" y="718.66" width="33.77" height="33.77" fill="#7201a8"/>
<rect x="864.27" y="718.66" width="33.77" height="33.77" fill="#6300a7"/>
<rect x="897.74" y="718.66" width="33.77" height="33.77" fill="#6a00a8"/>
<rect x="931.21" y="718.66" width="33.77" height="33.77" fill="#6600a7"/>
<rect x="964.68" y="718.66" width="33.77" height="33.77" fill="#7201a8"/>
<rect x="998.15" y="718.66" width="33.77" height="33.77" fill="#6300a7"/>
<rect x="1031.62" y="718.66" width="67.24" height="33.77" fill="#6a00a8"/>
<rect x="1098.56" y="718.66" width="33.77" height="33.77" fill="#6e00a8"/>
<rect x="1132.03" y="718.66" width="33.77" height="33.77" fill="#6300a7"/>
<rect x="1165.50" y="718.66" width="33.77" height="33.77" fill="#6e00a8"/>
<rect x="1198.97" y="718.66" width="33.77" height="33.77" fill="#6a00a8"/>
<rect x="161.40" y="752.13" width="67.24" height="33.77" fill="#6600a7"/>
<rect x="228.34" y="752.13" width="33.77" height="33.77" fill="#6300a7"/>
<rect x="261.81" y="752.13" width="33.77" height="33.77" fill="#6600a7"/>
<rect x="295.28" y="752.13" width="33.77" height="33.77" fill="#6300a7"/>
<rect x="328.75" y="752.13" width="33.77" height="33.77" fill="#6e00a8"/>
<rect x="362.22" y="752.13" width="33.77" height="33.77" fill="#6600a7"/>
<rect x="395.69" y="752.13" width="33.77" height="33.77" fill="#6a00a8"/>
<rect x="429.16" y="752.13" width="33.77" height="33.77" fill="#6600a7"/>
<rect x="462.63" y="752.13" width="100.71" height="33.77" fill="#6a00a8"/>
<rect x="563.04" y="752.13" width="33.77" height="33.77" fill="#8104a7"/>
<rect x="596.51" y="752.13" width="33.77" height="33.77" fill="#a72197"/>
<rect x="629.98" y="752.13" width="33.77" height="33.77" fill="#c13b82"/>
<rect x="663.45" y="752.13" width="33.77" height="33.77" fill="#bf3984"/>
<rect x="696.92" y="752.13" width="33.77" height="33.77" fill="#9e199d"/>
<rect x="730.39" y="752.13" width="33.77" height="33.77" fill="#8606a6"/>
<rect x="763.86" y="752.13" width="67.24" height="33.77" fill="#6a00a8"/>
<rect x="830.80" y="752.13" width="33.77" height="33.77" fill="#6600a7"/>
<rect x="864.27" y="752.13" width="67.24" height="33.77" fill="#6a00a8"/>
<rect x="931.21" y="752.13" width="33.77" height="33.77" fill="#6e00a8"/>
<rect x="964.68" y="752.13" width="33.77" height="33.77" fill="#6300a7"/>
<rect x="998.15" y="752.13" width="33.77" height="33.77" fill="#6a00a8"/>
<rect x="1031.62" y="752.13" width="67.24" height="33.77" fill="#6600a7"/>
<rect x="1098.56" y="752.13" width="33.77" height="33.77" fill="#6a00a8"/>
<rect x="1132.03" y="752.13" width="33.77" height="33.77" fill="#6600a7"/>
<rect x="1165.50" y="752.13" width="33.77" height="33.77" fill="#6a00a8"/>
<rect x="1198.97" y="752.13" width="33.77" height="33.77" fill="#6e00a8"/>
<rect x="161.40" y="785.60" width="33.77" height="33.77" fill="#6e00a8"/>
<rect x="194.87" y="785.60" width="33.77" height="33.77" fill="#6300a7"/>
<rect x="228.34" y="785.60" width="33.77" height="33.77" fill="#6e00a8"/>
<rect x="261.81" y="785.60" width="33.77" height="33.77" fill="#6600a7"/>
<rect x="295.28" y="785.60" width="33.77" height="33.77" fill="#6a00a8"/>
<rect x="328.75" y="785.60" width="33.77" height="33.77" fill="#5e01a6"/>
<rect x="362.22" y="785.60" width="201.12" height="33.77" fill="#6a00a8"/>
<rect x="563.04" y="785.60" width="33.77" height="33.77" fill="#8f0da4"/>
<rect x="596.51" y="785.60" width="33.77" height="33.77" fill="#a72197"/>
<rect x="629.98" y="785.60" width="33.77" height="33.77" fill="#c6417d"/>
<rect x="663.45" y="785.60" width="33.77" height="33.77" fill="#c13b82"/>
<rect x="696.92" y="785.60" width="33.77" height="33.77" fill="#9410a2"/>
<rect x="730.39" y="785.60" width="67.24" height="33.77" fill="#7201a8"/>
<rect x="797.33" y="785.60" width="33.77" height="33.77" fill="#6a00a8"/>
<rect x="830.80" y="785.60" width="67.24" height="33.77" fill="#6600a7"/>
<rect x="897.74" y="785.60" width="33.77" height="33.77" fill="#6a00a8"/>
<rect x="931.21" y="785.60" width="33.77" height="33.77" fill="#6600a7"/>
<rect x="964.68" y="785.60" width="33.77" height="33.77" fill="#6a00a8"/>
<rect x="998.15" y="785.60" width="33.77" height="33.77" fill="#6600a7"/>
<rect x="1031.62" y="785.60" width="67.24" height="33.77" fill="#6a00a8"/>
<rect x="1098.56" y="785.60" width="33.77" height="33.77" fill="#6e00a8"/>
<rect x="1132.03" y="785.60" width="33.77" height="33.77" fill="#6300a7"/>
<rect x="1165.50" y="785.60" width="33.77" height="33.77" fill="#6e00a8"/>
<rect x="1198.97" y="785.60" width="33.77" height="33.77" fill="#6600a7"/>
<rect x="161.40" y="819.07" width="33.77" height="33.77" fill="#6300a7"/>
<rect x="194.87" y="819.07" width="67.24" height="33.77" fill="#6a00a8"/>
<rect x="261.81" y="819.07" width="67.24" height="33.77" fill="#6600a7"/>
<rect x="328.75" y="819.07" width="33.77" height="33.77" fill="#6e00a8"/>
<rect x="362.22" y="819.07" width="33.77" height="33.77" fill="#6600a7"/>
<rect x="395.69" y="819.07" width="33.77" height="33.77" fill="#6a00a8"/>
<rect x="429.16" y="819.07" width="33.77" height="33.77" fill="#6300a7"/>
<rect x="462.63" y="819.07" width="100.71" height="33.77" fill="#6a00a8"/>
<rect x="563.04" y="819.07" width="33.77" height="33.77" fill="#8d0ba5"/>
<rect x="596.51" y="819.07" width="33.77" height="33.77" fill="#b12a90"/>
<rect x="629.98" y="819.07" width="33.77" height="33.77" fill="#cc4778"/>
<rect x="663.45" y="819.07" width="33.77" height="33.77" fill="#c9447a"/>
<rect x="696.92" y="819.07" width="33.77" height="33.77" fill="#8d0ba5"/>
<rect x="730.39" y="819.07" width="33.77" height="33.77" fill="#7a02a8"/>
<rect x="763.86" y="819.07" width="33.77" height="33.77" fill="#6a00a8"/>
<rect x="797.33" y="819.07" width="33.77" height="33.77" fill="#6e00a8"/>
<rect x="830.80" y="819.07" width="33.77" height="33.77" fill="#6300a7"/>
<rect x="864.27" y="819.07" width="33.77" height="33.77" fill="#6e00a8"/>
<rect x="897.74" y="819.07" width="33.77" height="33.77" fill="#6600a7"/>
<rect x="931.21" y="819.07" width="33.77" height="33.77" fill="#6e00a8"/>
<rect x="964.68" y="819.07" width="33.77" height="33.77" fill="#6a00a8"/>
<rect x="998.15" y="819.07" width="67.24" height="33.77" fill="#6600a7"/>
<rect x="1065.09" y="819.07" width="33.77" height="33.77" fill="#6e00a8"/>
<rect x="1098.56" y="819.07" width="33.77" height="33.77" fill="#6300a7"/>
<rect x="1132.03" y="819.07" width="33.77" height="33.77" fill="#7201a8"/>
<rect x="1165.50" y="819.07" width="33.77" height="33.77" fill="#6300a7"/>
<rect x="1198.97" y="819.07" width="33.77" height="33.77" fill="#6e00a8"/>
<rect x="161.40" y="852.54" width="33.77" height="33.77" fill="#7a02a8"/>
<rect x="194.87" y="852.54" width="33.77" height="33.77" fill="#6600a7"/>
<rect x="228.34" y="852.54" width="67.24" height="33.77" fill="#6a00a8"/>
<rect x="295.28" y="852.54" width="33.77" height="33.77" fill="#6600a7"/>
<rect x="328.75" y="852.54" width="33.77" height="33.77" fill="#6300a7"/>
<rect x="362.22" y="852.54" width="33.77" height="33.77" fill="#6e00a8"/>
<rect x="395.69" y="852.54" width="33.77" height="33.77" fill="#6a00a8"/>
<rect x="429.16" y="852.54" width="33.77" height="33.77" fill="#6e00a8"/>
<rect x="462.63" y="852.54" width="33.77" height="33.77" fill="#6600a7"/>
<rect x="496.10" y="852.54" width="67.24" height="33.77" fill="#6a00a8"/>
<rect x="563.04" y="852.54" width="33.77" height="33.77" fill="#9613a1"/>
<rect x="596.51" y="852.54" width="33.77" height="33.77" fill="#b12a90"/>
<rect x="629.98" y="852.54" width="33.77" height="33.77" fill="#d9586a"/>
<rect x="663.45" y="852.54" width="33.77" height="33.77" fill="#cd4a76"/>
<rect x="696.92" y="852.54" width="33.77" height="33.77" fill="#8808a6"/>
<rect x="730.39" y="852.54" width="100.71" height="33.77" fill="#6a00a8"/>
<rect x="830.80" y="852.54" width="33.77" height="33.77" fill="#6e00a8"/>
<rect x="864.27" y="852.54" width="33.77" height="33.77" fill="#6300a7"/>
<rect x="897.74" y="852.54" width="33.77" height="33.77" fill="#6a00a8"/>
<rect x="931.21" y="852.54" width="67.24" height="33.77" fill="#6e00a8"/>
<rect x="998.15" y="852.54" width="33.77" height="33.77" fill="#6600a7"/>
<rect x="1031.62" y="852.54" width="100.71" height="33.77" fill="#6e00a8"/>
<rect x="1132.03" y="852.54" width="33.77" height="33.77" fill="#6600a7"/>
<rect x="1165.50" y="852.54" width="67.24" height="33.77" fill="#6a00a8"/>
<rect x="161.40" y="886.01" width="67.24" height="33.77" fill="#0d0887"/>
<rect x="228.34" y="886.01" width="33.77" height="33.77" fill="#6a00a8"/>
<rect x="261.81" y="886.01" width="33.77" height="33.77" fill="#6e00a8"/>
<rect x="295.28" y="886.01" width="33.77" height="33.77" fill="#6600a7"/>
<rect x="328.75" y="886.01" width="33.77" height="33.77" fill="#6a00a8"/>
<rect x="362.22" y="886.01" width="33.77" height="33.77" fill="#6600a7"/>
<rect x="395.69" y="886.01" width="33.77" height="33.77" fill="#6a00a8"/>
<rect x="429.16" y="886.01" width="33.77" height="33.77" fill="#6600a7"/>
<rect x="462.63" y="886.01" width="100.71" height="33.77" fill="#6a00a8"/>
<rect x="563.04" y="886.01" width="33.77" height="33.77" fill="#8f0da4"/>
<rect x="596.51" y="886.01" width="33.77" height="33.77" fill="#bc3587"/>
<rect x="629.98" y="886.01" width="33.77" height="33.77" fill="#d9586a"/>
<rect x="663.45" y="886.01" width="33.77" height="33.77" fill="#cd4a76"/>
<rect x="696.92" y="886.01" width="33.77" height="33.77" fill="#7e03a8"/>
<rect x="730.39" y="886.01" width="33.77" height="33.77" fill="#6e00a8"/>
<rect x="763.86" y="886.01" width="67.24" height="33.77" fill="#6a00a8"/>
<rect x="830.80" y="886.01" width="33.77" height="33.77" fill="#6600a7"/>
<rect x="864.27" y="886.01" width="33.77" height="33.77" fill="#6e00a8"/>
<rect x="897.74" y="886.01" width="67.24" height="33.77" fill="#6a00a8"/>
<rect x="964.68" y="886.01" width="33.77" height="33.77" fill="#6600a7"/>
<rect x="998.15" y="886.01" width="100.71" height="33.77" fill="#6a00a8"/>
<rect x="1098.56" y="886.01" width="33.77" height="33.77" fill="#6300a7"/>
<rect x="1132.03" y="886.01" width="33.77" height="33.77" fill="#6e00a8"/>
<rect x="1165.50" y="886.01" width="33.77" height="33.77" fill="#6a00a8"/>
<rect x="1198.97" y="886.01" width="33.77" height="33.77" fill="#6600a7"/>
</g>
<defs><clipPath id="vc"><rect x="56" y="77.5" width="1282" height="883"/></clipPath></defs>
<g clip-path="url(#vc)" fill="none" stroke="#fff" stroke-width="1.5">
<circle cx="713.65" cy="250.08" r="167.35"/>
<circle cx="713.65" cy="82.73" r="133.88"/>
<circle cx="713.65" cy="-151.56" r="451.84"/>
</g>
<polygon transform="translate(697.0 316.9) rotate(45)" points="-14.6,-2.1 -2.1,-2.1 -2.1,-14.6 2.1,-14.6 2.1,-2.1 14.6,-2.1 14.6,2.1 2.1,2.1 2.1,14.6 -2.1,14.6 -2.1,2.1 -14.6,2.1" fill="none" stroke="#000" stroke-width="2.2" stroke-linejoin="round"/>
<g stroke="#969696" stroke-width="1.2" fill="none">
<path d="M55.5 76.5V960.4H1338.0"/>
</g>
<path stroke="#969696" stroke-width="1.05" stroke-opacity="1.00" fill="none" d="M161.4 958.9v-11.0M496.1 958.9v-11.0M830.8 958.9v-11.0M1165.5 958.9v-11.0M57.0 919.5h11.0M57.0 752.1h11.0M57.0 584.8h11.0M57.0 417.4h11.0M57.0 250.1h11.0M57.0 82.7h11.0"/>
<path stroke="#969696" stroke-width="1.05" stroke-opacity="0.85" fill="none" d="M328.8 958.9v-8.0M663.4 958.9v-8.0M998.1 958.9v-8.0M1332.9 958.9v-8.0M57.0 953.0h8.0M57.0 886.0h8.0M57.0 852.5h8.0M57.0 819.1h8.0M57.0 785.6h8.0M57.0 718.7h8.0M57.0 685.2h8.0M57.0 651.7h8.0M57.0 618.2h8.0M57.0 551.3h8.0M57.0 517.8h8.0M57.0 484.4h8.0M57.0 450.9h8.0M57.0 384.0h8.0M57.0 350.5h8.0M57.0 317.0h8.0M57.0 283.6h8.0M57.0 216.6h8.0M57.0 183.1h8.0M57.0 149.7h8.0M57.0 116.2h8.0"/>
<path stroke="#969696" stroke-width="1.05" stroke-opacity="0.60" fill="none" d="M61.0 958.9v-6.0M94.5 958.9v-6.0M127.9 958.9v-6.0M194.9 958.9v-6.0M228.3 958.9v-6.0M261.8 958.9v-6.0M295.3 958.9v-6.0M362.2 958.9v-6.0M395.7 958.9v-6.0M429.2 958.9v-6.0M462.6 958.9v-6.0M529.6 958.9v-6.0M563.0 958.9v-6.0M596.5 958.9v-6.0M630.0 958.9v-6.0M696.9 958.9v-6.0M730.4 958.9v-6.0M763.9 958.9v-6.0M797.3 958.9v-6.0M864.3 958.9v-6.0M897.7 958.9v-6.0M931.2 958.9v-6.0M964.7 958.9v-6.0M1031.6 958.9v-6.0M1065.1 958.9v-6.0M1098.6 958.9v-6.0M1132.0 958.9v-6.0M1199.0 958.9v-6.0M1232.4 958.9v-6.0M1265.9 958.9v-6.0M1299.4 958.9v-6.0M57.0 936.2h6.0M57.0 902.7h6.0M57.0 869.3h6.0M57.0 835.8h6.0M57.0 802.3h6.0M57.0 768.9h6.0M57.0 735.4h6.0M57.0 701.9h6.0M57.0 668.5h6.0M57.0 635.0h6.0M57.0 601.5h6.0M57.0 568.0h6.0M57.0 534.6h6.0M57.0 501.1h6.0M57.0 467.6h6.0M57.0 434.2h6.0M57.0 400.7h6.0M57.0 367.2h6.0M57.0 333.8h6.0M57.0 300.3h6.0M57.0 266.8h6.0M57.0 233.3h6.0M57.0 199.9h6.0M57.0 166.4h6.0M57.0 132.9h6.0M57.0 99.5h6.0"/>
<text transform="translate(161.4 988.3) scale(1.00 1.05)" text-anchor="middle">0</text>
<text transform="translate(328.8 988.3) scale(1.00 1.05)" text-anchor="middle">5</text>
<text transform="translate(496.1 988.3) scale(1.00 1.05)" text-anchor="middle">10</text>
<text transform="translate(663.4 988.3) scale(1.00 1.05)" text-anchor="middle">15</text>
<text transform="translate(830.8 988.3) scale(1.00 1.05)" text-anchor="middle">20</text>
<text transform="translate(998.1 988.3) scale(1.00 1.05)" text-anchor="middle">25</text>
<text transform="translate(1165.5 988.3) scale(1.00 1.05)" text-anchor="middle">30</text>
<text transform="translate(48.5 929.9) scale(1.00 1.05)" text-anchor="end">0</text>
<text transform="translate(48.5 762.5) scale(1.00 1.05)" text-anchor="end">5</text>
<text transform="translate(48.5 595.2) scale(1.00 1.05)" text-anchor="end">10</text>
<text transform="translate(48.5 427.8) scale(1.00 1.05)" text-anchor="end">15</text>
<text transform="translate(48.5 260.5) scale(1.00 1.05)" text-anchor="end">20</text>
<text transform="translate(48.5 93.1) scale(1.00 1.05)" text-anchor="end">25</text>
<g stroke="#969696" stroke-width="1.2" fill="none">
<path d="M1416.7 76.5V492.5H2385.0"/>
</g>
<path stroke="#969696" stroke-width="1.05" stroke-opacity="1.00" fill="none" d="M1493.4 491.0v-11.0M1761.1 491.0v-11.0M2028.8 491.0v-11.0M2296.5 491.0v-11.0M1418.2 84.3h11.0M1418.2 238.0h11.0M1418.2 391.7h11.0"/>
<path stroke="#969696" stroke-width="1.05" stroke-opacity="0.85" fill="none" d="M1627.2 491.0v-8.0M1895.0 491.0v-8.0M2162.7 491.0v-8.0M1418.2 161.1h8.0M1418.2 314.8h8.0M1418.2 468.5h8.0"/>
<path stroke="#969696" stroke-width="1.05" stroke-opacity="0.60" fill="none" d="M1439.9 491.0v-6.0M1466.6 491.0v-6.0M1520.2 491.0v-6.0M1546.9 491.0v-6.0M1573.7 491.0v-6.0M1600.5 491.0v-6.0M1654.0 491.0v-6.0M1680.8 491.0v-6.0M1707.6 491.0v-6.0M1734.3 491.0v-6.0M1787.9 491.0v-6.0M1814.6 491.0v-6.0M1841.4 491.0v-6.0M1868.2 491.0v-6.0M1921.7 491.0v-6.0M1948.5 491.0v-6.0M1975.3 491.0v-6.0M2002.0 491.0v-6.0M2055.6 491.0v-6.0M2082.3 491.0v-6.0M2109.1 491.0v-6.0M2135.9 491.0v-6.0M2189.4 491.0v-6.0M2216.2 491.0v-6.0M2243.0 491.0v-6.0M2269.7 491.0v-6.0M2323.3 491.0v-6.0M2350.0 491.0v-6.0M2376.8 491.0v-6.0M1418.2 99.7h6.0M1418.2 115.0h6.0M1418.2 130.4h6.0M1418.2 145.8h6.0M1418.2 176.5h6.0M1418.2 191.9h6.0M1418.2 207.2h6.0M1418.2 222.6h6.0M1418.2 253.3h6.0M1418.2 268.7h6.0M1418.2 284.1h6.0M1418.2 299.5h6.0M1418.2 330.2h6.0M1418.2 345.6h6.0M1418.2 360.9h6.0M1418.2 376.3h6.0M1418.2 407.0h6.0M1418.2 422.4h6.0M1418.2 437.8h6.0M1418.2 453.1h6.0M1418.2 483.9h6.0"/>
<text transform="translate(1493.4 520.3) scale(1.05 1.05)" text-anchor="middle">7e+07</text>
<text transform="translate(1761.1 520.3) scale(1.05 1.05)" text-anchor="middle">8e+07</text>
<text transform="translate(2028.8 520.3) scale(1.05 1.05)" text-anchor="middle">9e+07</text>
<text transform="translate(2296.5 520.3) scale(1.05 1.05)" text-anchor="middle">1e+08</text>
<text transform="translate(1409.0 94.5) scale(1.00 1.05)" text-anchor="end">145</text>
<text transform="translate(1409.0 171.3) scale(1.00 1.05)" text-anchor="end">144.5</text>
<text transform="translate(1409.0 248.2) scale(1.00 1.05)" text-anchor="end">144</text>
<text transform="translate(1409.0 325.0) scale(1.00 1.05)" text-anchor="end">143.5</text>
<text transform="translate(1409.0 401.9) scale(1.00 1.05)" text-anchor="end">143</text>
<text transform="translate(1409.0 478.7) scale(1.00 1.05)" text-anchor="end">142.5</text>
<g stroke="#969696" stroke-width="1.2" fill="none">
<path d="M1398.6 544.0V960.6H2385.0"/>
</g>
<path stroke="#969696" stroke-width="1.05" stroke-opacity="1.00" fill="none" d="M1475.5 959.1v-11.0M1749.4 959.1v-11.0M2023.3 959.1v-11.0M2297.2 959.1v-11.0M1400.1 608.6h11.0M1400.1 729.2h11.0M1400.1 849.8h11.0"/>
<path stroke="#969696" stroke-width="1.05" stroke-opacity="0.85" fill="none" d="M1612.5 959.1v-8.0M1886.3 959.1v-8.0M2160.2 959.1v-8.0M1400.1 548.3h8.0M1400.1 668.9h8.0M1400.1 789.5h8.0M1400.1 910.1h8.0"/>
<path stroke="#969696" stroke-width="1.05" stroke-opacity="0.60" fill="none" d="M1420.7 959.1v-6.0M1448.1 959.1v-6.0M1502.9 959.1v-6.0M1530.3 959.1v-6.0M1557.7 959.1v-6.0M1585.1 959.1v-6.0M1639.8 959.1v-6.0M1667.2 959.1v-6.0M1694.6 959.1v-6.0M1722.0 959.1v-6.0M1776.8 959.1v-6.0M1804.2 959.1v-6.0M1831.6 959.1v-6.0M1859.0 959.1v-6.0M1913.7 959.1v-6.0M1941.1 959.1v-6.0M1968.5 959.1v-6.0M1995.9 959.1v-6.0M2050.7 959.1v-6.0M2078.1 959.1v-6.0M2105.5 959.1v-6.0M2132.9 959.1v-6.0M2187.6 959.1v-6.0M2215.0 959.1v-6.0M2242.4 959.1v-6.0M2269.8 959.1v-6.0M2324.6 959.1v-6.0M2352.0 959.1v-6.0M2379.4 959.1v-6.0M1400.1 560.4h6.0M1400.1 572.4h6.0M1400.1 584.5h6.0M1400.1 596.5h6.0M1400.1 620.7h6.0M1400.1 632.7h6.0M1400.1 644.8h6.0M1400.1 656.8h6.0M1400.1 681.0h6.0M1400.1 693.0h6.0M1400.1 705.1h6.0M1400.1 717.1h6.0M1400.1 741.3h6.0M1400.1 753.3h6.0M1400.1 765.4h6.0M1400.1 777.4h6.0M1400.1 801.6h6.0M1400.1 813.6h6.0M1400.1 825.7h6.0M1400.1 837.7h6.0M1400.1 861.9h6.0M1400.1 873.9h6.0M1400.1 886.0h6.0M1400.1 898.0h6.0M1400.1 922.2h6.0M1400.1 934.2h6.0M1400.1 946.3h6.0"/>
<text transform="translate(1475.5 988.3) scale(1.05 1.05)" text-anchor="middle">7e+07</text>
<text transform="translate(1749.4 988.3) scale(1.05 1.05)" text-anchor="middle">8e+07</text>
<text transform="translate(2023.3 988.3) scale(1.05 1.05)" text-anchor="middle">9e+07</text>
<text transform="translate(2297.2 988.3) scale(1.05 1.05)" text-anchor="middle">1e+08</text>
<text transform="translate(1391.0 920.3) scale(1.00 1.05)" text-anchor="end">70</text>
<text transform="translate(1391.0 860.0) scale(1.00 1.05)" text-anchor="end">80</text>
<text transform="translate(1391.0 799.7) scale(1.00 1.05)" text-anchor="end">90</text>
<text transform="translate(1391.0 739.4) scale(1.00 1.05)" text-anchor="end">100</text>
<text transform="translate(1391.0 679.1) scale(1.00 1.05)" text-anchor="end">110</text>
<text transform="translate(1391.0 618.8) scale(1.00 1.05)" text-anchor="end">120</text>
<text transform="translate(1391.0 558.5) scale(1.00 1.05)" text-anchor="end">130</text>
<polyline fill="none" stroke="#f00" stroke-width="1.05" stroke-linejoin="round" points="1459.4,302.9 1460.9,326.1 1461.6,319.5 1463.1,346.5 1464.6,309.0 1465.3,326.9 1466.8,285.8 1468.0,319.5 1468.6,300.0 1469.8,340.9 1471.7,312.1 1472.7,325.9 1474.6,285.0 1475.7,297.7 1476.2,290.1 1477.3,303.6 1479.5,296.2 1480.5,314.0 1481.1,308.5 1482.1,324.1 1483.3,295.7 1483.9,302.6 1485.1,275.7 1485.8,305.2 1486.2,288.9 1486.9,318.5 1487.7,291.5 1488.1,302.5 1488.8,267.1 1491.0,288.7 1491.8,275.9 1492.2,281.0 1492.9,268.2 1494.4,322.3 1495.5,253.3 1496.4,275.3 1496.9,262.6 1497.7,288.7 1498.5,307.0 1498.9,301.7 1499.6,322.3 1500.5,294.7 1501.0,304.5 1501.8,273.8 1502.9,320.2 1503.4,307.4 1504.5,355.8 1507.1,288.7 1508.0,271.7 1508.4,279.1 1509.3,261.5 1511.2,318.5 1513.0,290.6 1513.9,337.3 1514.4,308.4 1515.3,355.8 1516.0,340.9 1516.4,349.5 1517.1,333.5 1518.2,380.0 1519.7,299.9 1520.8,317.0 1521.3,312.8 1522.3,333.5 1524.9,310.4 1526.4,348.3 1527.2,327.5 1528.7,365.1 1531.3,327.9 1532.8,367.6 1533.5,349.5 1535.0,391.2 1536.9,315.6 1539.1,352.1 1540.4,391.8 1541.1,368.2 1542.5,413.6 1545.4,381.9 1546.9,404.2 1549.2,389.3 1551.8,417.3 1554.0,370.7 1554.8,390.3 1555.1,383.6 1555.9,404.2 1557.4,389.3 1558.1,406.1 1558.5,397.3 1559.2,417.3 1560.1,405.8 1560.6,408.3 1561.5,394.9 1565.9,404.2 1567.3,393.9 1567.9,398.1 1569.3,385.6 1571.1,396.8 1572.6,323.0 1574.9,378.2 1575.6,393.8 1576.0,387.5 1576.7,404.2 1579.0,346.5 1580.8,415.4 1581.6,443.4 1583.4,393.1 1584.2,357.8 1584.6,373.9 1585.3,333.5 1586.8,357.7 1589.8,289.5 1592.0,333.5 1592.9,356.5 1593.4,346.1 1594.2,376.3 1595.1,352.6 1595.6,361.9 1596.5,337.2 1597.2,359.6 1597.6,352.1 1598.3,381.9 1599.5,335.3 1600.1,349.1 1601.3,307.4 1603.6,335.3 1604.9,295.0 1605.6,310.9 1606.9,272.0 1607.7,299.3 1608.0,287.9 1608.8,311.1 1612.1,280.2 1614.0,317.4 1615.5,233.6 1616.4,248.5 1616.8,240.5 1617.7,258.9 1618.8,242.2 1620.7,273.8 1621.4,263.3 1621.8,267.9 1622.6,253.3 1624.1,260.8 1624.9,243.7 1625.4,253.0 1626.3,231.0 1628.2,236.6 1629.6,195.6 1631.1,214.2 1632.6,167.7 1634.5,169.5 1636.3,180.7 1637.2,169.8 1637.7,175.2 1638.6,160.2 1639.6,141.4 1640.1,144.4 1641.2,122.9 1643.8,161.3 1646.8,150.9 1648.0,134.3 1648.6,141.4 1649.8,121.1 1650.5,136.8 1650.9,133.6 1651.6,150.9 1653.9,104.3 1656.1,111.8 1658.3,106.2 1659.8,136.0 1660.7,151.3 1661.2,142.8 1662.1,161.3 1663.1,147.8 1663.6,154.2 1664.7,137.8 1666.5,160.2 1667.3,148.9 1667.6,150.4 1668.4,137.8 1670.0,149.0 1670.7,172.8 1671.1,165.1 1671.9,193.7 1672.6,211.0 1673.0,206.2 1673.7,221.7 1675.6,167.7 1678.2,162.1 1680.4,145.3 1681.2,175.6 1681.5,160.1 1682.3,197.5 1684.2,182.6 1685.1,206.3 1685.5,193.7 1686.4,218.0 1687.3,245.8 1687.7,236.3 1688.6,258.9 1691.2,331.6 1693.1,270.1 1696.1,320.4 1699.1,301.8 1702.4,298.1 1703.3,287.8 1703.8,292.7 1704.6,281.3 1705.4,265.6 1705.8,271.8 1706.5,250.4 1707.3,275.4 1707.6,267.3 1708.4,288.7 1709.9,326.0 1711.4,301.8 1712.1,316.3 1712.5,311.0 1713.2,322.3 1715.1,294.3 1716.6,353.9 1717.3,334.5 1717.7,343.5 1718.4,318.5 1719.5,328.7 1720.0,325.5 1721.0,337.2 1722.9,333.5 1725.1,314.8 1727.4,318.5 1729.6,346.5 1731.8,342.8 1733.3,367.0 1734.1,376.6 1734.5,373.1 1735.2,381.9 1736.1,359.0 1736.5,366.6 1737.4,346.5 1739.7,352.1 1740.8,312.2 1742.7,335.3 1744.1,311.1 1745.6,314.8 1747.1,309.2 1749.0,352.1 1749.7,344.0 1750.1,346.0 1750.8,337.2 1751.6,354.8 1752.0,348.8 1752.7,363.3 1754.9,372.6 1756.4,305.5 1757.2,325.2 1757.6,320.2 1758.3,339.0 1759.8,378.2 1761.7,352.1 1763.1,394.9 1764.6,322.3 1766.1,313.0 1766.9,349.3 1767.2,332.3 1768.0,381.9 1769.9,324.1 1771.7,333.5 1773.2,311.1 1775.1,335.3 1775.8,323.9 1776.2,327.8 1776.9,318.5 1778.4,307.4 1779.9,333.5 1781.8,419.1 1782.5,375.2 1782.9,399.6 1783.6,348.4 1784.4,312.5 1784.8,329.2 1785.5,298.1 1786.2,344.0 1786.6,320.0 1787.4,363.3 1789.2,318.5 1791.8,273.8 1792.6,298.7 1793.0,287.6 1793.7,318.5 1795.9,322.3 1796.7,305.9 1797.0,314.4 1797.8,296.2 1798.9,290.6 1800.4,333.5 1801.3,298.0 1801.7,304.5 1802.6,266.4 1803.7,254.1 1804.2,258.9 1805.2,245.9 1807.1,275.7 1809.0,264.5 1809.7,289.4 1810.1,276.9 1810.8,299.9 1811.7,290.8 1812.2,296.1 1813.1,285.0 1813.8,276.0 1814.2,280.8 1814.9,268.2 1817.5,292.5 1818.4,267.7 1818.9,276.3 1819.8,251.5 1821.3,247.0 1822.8,277.6 1823.5,290.3 1823.9,285.5 1824.6,299.9 1825.4,261.1 1825.7,284.3 1826.5,242.2 1828.3,245.9 1829.4,238.7 1829.9,241.9 1831.0,232.9 1833.2,191.9 1834.7,208.6 1836.2,174.0 1836.9,194.4 1837.3,187.2 1838.0,206.8 1839.2,227.3 1841.0,186.3 1842.5,221.7 1844.0,210.5 1844.7,227.1 1845.1,219.7 1845.9,236.6 1846.8,248.7 1847.2,242.9 1848.1,255.2 1850.3,262.7 1851.1,273.9 1851.4,270.8 1852.2,281.3 1854.1,305.5 1856.3,273.8 1858.9,233.6 1859.6,249.4 1860.0,244.7 1860.8,258.9 1862.6,281.3 1863.5,297.6 1864.0,291.8 1864.9,312.2 1865.8,283.8 1866.2,298.6 1867.1,260.8 1869.0,307.4 1871.2,303.6 1873.8,299.9 1875.7,326.0 1877.5,314.8 1879.4,348.4 1880.1,374.1 1880.5,363.3 1881.3,387.5 1882.0,370.7 1882.4,376.7 1883.1,363.3 1884.6,378.2 1885.4,354.4 1885.7,367.1 1886.5,344.6 1887.2,379.4 1887.6,364.8 1888.3,393.1 1889.1,408.6 1889.4,402.3 1890.2,419.1 1892.1,426.6 1894.3,419.1 1895.2,391.8 1895.6,403.4 1896.5,368.8 1898.4,380.0 1900.0,387.5 1901.5,349.5 1903.4,408.0 1904.1,380.2 1904.5,392.8 1905.2,363.3 1906.1,375.0 1906.6,370.9 1907.5,383.7 1909.3,378.2 1910.1,391.6 1910.4,389.8 1911.2,404.2 1913.4,443.4 1915.3,381.9 1917.1,383.7 1918.6,370.0 1919.5,382.9 1920.0,375.9 1920.9,393.1 1923.1,372.6 1925.3,383.7 1927.2,389.3 1928.1,371.6 1928.5,378.1 1929.4,355.8 1931.7,372.6 1932.8,380.0 1934.3,352.1 1936.1,322.3 1936.9,339.1 1937.3,336.0 1938.0,353.9 1939.9,361.4 1941.7,359.5 1942.5,371.7 1942.8,364.5 1943.6,378.2 1945.1,360.3 1946.0,376.8 1946.4,368.8 1947.3,385.6 1948.8,381.9 1949.9,329.7 1951.8,322.3 1953.3,327.9 1954.8,240.3 1956.3,359.5 1957.0,301.6 1957.4,328.6 1958.1,277.6 1960.0,285.0 1961.8,307.4 1963.7,298.1 1965.2,303.6 1966.7,264.5 1967.4,208.6 1967.8,243.1 1968.6,183.3 1969.7,258.9 1971.2,169.5 1972.7,163.9 1973.8,294.3 1975.6,281.3 1977.1,262.7 1978.2,231.0 1979.7,234.7 1980.5,273.3 1980.8,258.9 1981.6,301.8 1983.1,270.1 1984.6,253.3 1986.1,303.6 1987.6,329.7 1989.4,273.1 1990.9,322.3 1992.4,281.3 1993.1,304.9 1993.5,297.2 1994.3,326.0 1995.8,316.7 1996.5,298.1 1996.9,306.7 1997.6,281.3 1998.4,301.6 1998.7,292.9 1999.5,318.5 2000.2,331.0 2000.6,324.3 2001.3,337.2 2003.2,333.5 2004.7,374.4 2006.2,352.1 2006.9,378.2 2007.3,367.5 2008.0,400.5 2008.8,385.0 2009.2,393.4 2009.9,372.6 2011.8,374.4 2013.6,408.0 2015.1,378.2 2017.0,376.3 2018.5,411.7 2020.7,419.1 2022.2,430.3 2023.0,445.5 2023.3,440.0 2024.1,458.3 2025.2,462.0 2026.7,430.3 2028.2,445.2 2030.0,403.5 2030.9,414.1 2031.4,408.8 2032.3,419.1 2034.1,422.9 2034.9,443.2 2035.2,432.7 2036.0,452.7 2037.5,463.9 2038.6,426.6 2039.3,405.2 2039.7,412.0 2040.5,393.8 2041.2,423.8 2041.6,411.0 2042.3,437.8 2043.8,452.7 2045.7,380.0 2046.4,394.0 2046.8,386.3 2047.5,404.2 2049.0,411.7 2050.5,371.5 2051.3,402.8 2051.6,395.6 2052.4,432.2 2053.1,397.2 2053.5,414.8 2054.2,367.0 2055.7,337.2 2057.2,389.3 2059.5,374.4 2061.7,352.1 2063.6,320.4 2064.5,301.9 2064.9,310.1 2065.8,286.9 2067.3,309.2 2068.0,296.3 2068.4,301.0 2069.2,285.0 2069.9,303.6 2070.3,296.6 2071.0,311.1 2071.9,329.3 2072.4,325.6 2073.2,343.9 2074.0,324.9 2074.4,335.7 2075.1,311.1 2076.6,299.9 2077.3,284.2 2077.7,290.8 2078.5,273.8 2080.0,311.1 2080.7,287.2 2081.1,301.3 2081.8,272.0 2083.3,228.0 2084.1,240.2 2084.4,235.8 2085.2,251.5 2086.7,312.2 2088.2,288.7 2090.0,283.2 2090.9,289.7 2091.4,287.2 2092.3,296.2 2094.5,292.5 2096.7,299.9 2099.0,312.2 2099.7,325.6 2100.1,319.8 2100.8,333.5 2102.3,355.8 2103.8,303.6 2105.3,278.3 2107.2,333.5 2109.0,365.1 2110.9,318.5 2112.7,327.9 2114.6,355.8 2115.4,364.3 2115.7,362.5 2116.5,370.7 2118.0,382.6 2118.7,364.9 2119.1,372.5 2119.8,355.8 2120.6,345.6 2120.9,349.4 2121.7,340.9 2123.5,337.2 2125.0,340.9 2126.9,382.6 2128.4,337.2 2130.0,327.9 2131.5,352.1 2133.0,374.4 2134.8,318.5 2136.3,303.6 2137.8,348.4 2139.3,320.4 2140.8,355.8 2142.7,387.5 2143.4,365.7 2143.8,375.1 2144.5,352.1 2146.4,340.9 2148.3,331.6 2149.7,355.8 2151.6,316.7 2153.1,333.5 2154.6,363.3 2156.5,362.5 2157.9,370.7 2159.8,419.1 2162.0,367.0 2163.5,413.6 2164.3,391.5 2164.6,401.3 2165.4,381.9 2168.0,372.6 2169.9,396.8 2170.6,403.4 2171.0,400.4 2171.7,409.8 2172.5,399.1 2172.8,401.3 2173.6,389.3 2174.3,410.7 2174.7,401.9 2175.5,422.9 2177.3,408.0 2178.1,401.4 2178.4,402.6 2179.2,394.9 2181.0,406.1 2182.9,396.8 2185.1,393.1 2187.0,370.7 2187.7,378.8 2188.1,375.7 2188.9,383.7 2190.4,406.1 2191.1,387.6 2191.5,397.7 2192.2,378.2 2193.1,360.5 2193.6,365.6 2194.5,346.5 2195.9,381.9 2196.7,343.6 2197.1,356.2 2197.8,324.1 2199.3,368.8 2200.8,346.5 2201.9,393.1 2203.4,450.8 2204.9,400.5 2206.8,389.3 2208.2,368.8 2209.7,411.7 2210.5,426.9 2210.8,420.7 2211.6,437.8 2213.5,426.6 2215.3,396.8 2217.2,389.3 2219.0,380.0 2220.5,381.9 2222.0,355.8 2223.9,327.9 2225.4,315.6 2226.9,337.2 2228.4,394.9 2229.9,359.5 2231.7,355.8 2233.6,372.6 2235.4,385.6 2236.2,395.5 2236.6,391.2 2237.3,404.2 2239.2,415.4 2240.7,344.6 2242.1,389.3 2243.6,346.5 2245.9,348.4 2247.7,361.4 2248.5,374.2 2248.9,366.6 2249.6,381.9 2251.1,424.7 2252.6,331.6 2254.1,348.4 2255.9,352.1 2256.7,362.5 2257.0,359.2 2257.8,370.7 2259.7,415.4 2261.5,389.3 2262.3,412.2 2262.6,402.1 2263.4,426.6 2264.5,331.6 2266.0,348.4 2267.9,359.5 2268.6,377.2 2269.0,373.9 2269.7,393.1 2271.6,402.4 2273.8,400.5 2275.3,353.9 2276.8,404.2 2278.3,393.1 2279.8,381.9 2281.3,408.0 2282.4,447.1 2283.1,427.1 2283.5,434.9 2284.2,419.1 2286.5,422.9 2289.1,424.7 2290.6,408.0 2292.1,362.5 2293.6,389.3 2295.1,365.1 2296.5,393.1 2297.3,407.6 2297.7,403.1 2298.4,417.3 2299.5,411.7 2301.0,422.9 2302.5,370.7 2304.0,411.7 2305.5,378.2 2307.3,413.6 2308.5,374.4 2310.0,430.3 2311.4,404.2 2313.3,402.4 2314.8,368.8 2316.3,389.3 2317.8,419.1 2319.6,417.3 2320.4,428.7 2320.8,423.3 2321.5,437.8 2323.4,428.5 2324.9,378.2 2326.3,422.9 2327.8,389.3 2329.3,406.1 2330.4,375.2 2331.9,404.2 2333.4,389.3 2334.9,383.7 2336.8,426.6 2338.3,411.7 2339.4,370.7 2340.9,355.8"/>
<polyline fill="none" stroke="#f00" stroke-width="1.05" stroke-linejoin="round" points="1442.3,759.3 1443.8,766.0 1446.0,761.2 1447.5,750.0 1449.0,737.0 1450.5,735.1 1452.0,742.6 1453.5,733.2 1455.3,732.1 1457.2,727.7 1458.7,729.5 1460.6,725.8 1462.8,722.1 1464.3,707.2 1466.1,684.8 1468.0,682.2 1469.5,690.4 1471.4,704.6 1473.2,697.9 1475.1,691.1 1477.3,689.7 1479.2,683.0 1481.0,680.3 1483.3,685.9 1485.1,694.1 1487.0,705.3 1488.9,714.6 1490.7,697.9 1492.6,686.7 1494.1,701.6 1495.9,716.5 1497.4,733.2 1499.3,746.3 1501.2,747.4 1503.0,740.0 1504.9,744.4 1506.8,748.2 1508.6,744.4 1510.5,741.8 1512.3,742.6 1514.6,743.7 1516.4,746.3 1517.9,751.9 1519.4,746.3 1521.3,755.6 1523.1,763.1 1525.4,772.4 1526.9,776.1 1529.1,781.7 1530.6,792.9 1532.5,804.0 1534.3,817.1 1536.6,826.4 1538.4,835.7 1540.7,848.7 1542.5,850.6 1544.4,848.7 1546.2,852.5 1548.1,858.1 1550.3,863.7 1552.6,867.4 1554.8,865.5 1556.7,863.7 1558.5,871.1 1560.4,878.6 1562.6,882.3 1564.9,884.1 1566.7,887.9 1567.9,895.3 1569.3,887.9 1570.8,895.3 1572.7,893.5 1574.6,897.2 1576.4,902.8 1578.7,906.5 1580.5,910.2 1582.4,906.5 1583.9,913.9 1585.7,908.4 1587.2,917.7 1589.1,915.8 1590.6,925.1 1592.4,915.8 1594.3,921.4 1596.2,928.9 1598.0,930.7 1599.9,928.1 1601.8,930.7 1603.6,927.0 1605.9,929.6 1607.7,923.3 1609.6,913.9 1611.1,895.3 1612.6,876.7 1614.4,861.8 1616.3,848.7 1618.2,843.2 1620.4,835.7 1622.3,828.3 1623.7,822.7 1625.6,820.8 1627.5,813.4 1629.7,807.8 1631.9,802.2 1634.2,794.7 1635.7,772.4 1637.2,738.8 1639.4,731.4 1641.6,723.9 1643.9,718.3 1646.1,712.8 1648.0,707.2 1649.4,686.7 1650.9,668.0 1652.4,645.7 1653.9,632.7 1655.8,630.8 1657.6,634.5 1659.5,640.1 1660.0,640.1 1661.9,647.6 1663.4,617.7 1664.8,619.6 1666.3,649.4 1668.2,664.3 1670.1,673.6 1671.9,684.8 1674.2,696.0 1675.6,720.2 1677.1,757.5 1678.6,783.5 1680.5,800.3 1682.4,805.9 1684.6,808.9 1686.8,805.9 1689.1,800.3 1691.7,794.7 1693.5,789.1 1695.0,791.0 1696.9,794.7 1698.7,787.3 1701.0,781.7 1704.0,779.8 1705.8,764.9 1707.7,759.3 1709.9,755.6 1712.2,748.2 1714.4,735.1 1716.6,727.7 1718.9,716.5 1720.7,710.9 1723.0,705.3 1724.8,695.2 1727.1,703.4 1729.3,709.0 1731.5,713.5 1734.1,718.3 1736.4,725.8 1738.6,731.4 1740.8,740.7 1742.7,753.7 1744.9,766.8 1747.2,783.5 1749.4,796.6 1751.7,809.6 1753.9,820.8 1755.8,832.0 1757.6,837.6 1759.9,843.2 1762.1,850.6 1764.3,859.9 1766.6,865.5 1768.8,868.5 1771.0,867.4 1773.3,873.0 1775.5,871.1 1777.0,878.6 1778.9,876.7 1780.3,884.1 1782.2,880.4 1784.1,887.9 1785.9,895.3 1788.2,895.3 1790.4,894.6 1792.6,889.7 1794.9,899.0 1797.1,904.6 1799.3,908.4 1801.6,912.1 1803.1,913.2 1804.9,902.8 1806.8,887.9 1808.3,869.2 1809.8,850.6 1811.6,835.7 1813.9,833.8 1815.7,820.8 1818.0,815.2 1820.2,802.2 1822.4,787.3 1824.3,768.6 1826.2,742.6 1828.4,748.2 1830.6,753.7 1832.9,755.6 1835.1,751.9 1837.3,744.4 1839.6,735.1 1841.4,712.8 1842.9,679.2 1844.4,645.7 1845.9,628.9 1847.8,627.1 1849.3,630.8 1850.8,643.8 1852.6,632.7 1854.1,630.8 1856.0,634.5 1857.5,655.0 1859.7,656.9 1861.6,660.6 1863.4,668.0 1865.3,679.2 1867.5,690.4 1869.0,709.0 1870.1,738.8 1871.3,776.1 1872.4,796.6 1874.2,807.8 1876.5,809.6 1878.7,808.9 1880.6,804.0 1882.4,798.5 1884.3,792.9 1886.5,794.7 1888.8,789.1 1890.0,785.4 1892.2,776.1 1894.5,772.4 1896.7,769.4 1898.6,774.2 1900.8,774.2 1903.0,778.0 1904.9,787.3 1907.1,796.6 1909.4,807.8 1911.2,824.5 1913.1,833.8 1915.0,830.1 1916.8,841.3 1919.1,846.9 1920.9,857.3 1923.2,854.3 1925.0,861.0 1927.3,863.7 1929.5,871.1 1931.7,873.0 1933.2,868.5 1935.1,878.6 1937.3,881.2 1939.6,884.1 1941.0,885.3 1942.9,882.3 1945.1,878.6 1947.0,863.7 1948.9,843.2 1950.7,828.3 1952.6,820.8 1954.8,813.4 1957.1,807.8 1958.6,776.1 1960.0,746.3 1961.9,738.8 1963.8,729.5 1965.6,723.9 1967.9,721.0 1970.1,718.3 1971.6,719.5 1973.1,727.7 1974.9,729.5 1976.4,730.6 1977.9,709.0 1979.4,675.5 1981.3,640.1 1982.8,634.5 1984.6,632.7 1986.1,615.9 1987.6,611.4 1989.1,623.3 1990.6,640.1 1992.1,658.7 1993.9,669.9 1995.8,684.8 1997.7,692.3 1999.9,701.6 2001.8,727.7 2003.6,753.7 2005.5,776.1 2007.4,798.5 2009.2,820.8 2011.5,825.3 2013.7,823.8 2015.9,822.7 2018.2,827.5 2020.0,821.5 2022.3,830.1 2024.5,837.6 2026.7,845.0 2029.0,852.5 2031.2,856.2 2033.4,859.9 2035.7,861.8 2037.9,868.5 2040.1,865.5 2042.4,869.2 2044.2,867.4 2046.1,874.1 2048.0,865.5 2049.8,852.5 2051.7,828.3 2053.6,802.2 2055.4,776.1 2057.3,753.7 2059.5,742.6 2061.8,739.6 2064.0,739.6 2065.9,720.2 2068.1,690.4 2070.3,660.6 2072.6,634.5 2074.4,608.4 2075.9,582.4 2077.4,573.0 2078.5,571.9 2079.6,595.4 2081.1,599.1 2083.0,601.0 2084.9,610.3 2087.1,619.6 2089.3,627.1 2091.6,638.2 2093.4,645.7 2095.3,642.7 2097.2,668.0 2099.0,690.4 2100.9,716.5 2102.7,738.8 2105.0,753.7 2107.2,772.4 2109.4,787.3 2111.3,800.3 2113.2,820.8 2115.0,839.4 2116.5,858.1 2118.0,861.0 2119.5,850.6 2120.0,850.6 2121.5,820.8 2123.0,798.5 2124.5,789.1 2126.7,783.5 2128.6,772.4 2130.4,764.9 2132.3,762.3 2134.2,766.8 2136.0,772.4 2137.9,777.2 2139.4,778.0 2141.2,770.5 2143.1,757.5 2145.0,738.8 2146.8,725.8 2148.7,721.0 2150.6,720.2 2152.8,723.9 2155.0,725.8 2156.9,735.1 2158.7,742.6 2160.6,753.7 2162.5,768.6 2164.3,787.3 2166.6,802.2 2168.1,820.8 2169.6,837.6 2170.7,843.9 2171.8,820.8 2172.9,791.0 2174.0,770.5 2175.5,766.0 2177.0,770.5 2178.9,779.8 2180.7,791.0 2183.0,792.9 2185.2,795.5 2187.1,796.6 2188.9,794.0 2190.8,792.9 2192.7,795.5 2194.5,794.0 2196.4,791.7 2198.2,796.6 2200.1,800.3 2202.3,804.0 2204.2,807.8 2205.7,820.8 2206.8,837.6 2207.6,842.0 2208.7,820.8 2209.8,783.5 2210.9,755.6 2212.4,752.6 2213.9,754.5 2215.4,768.6 2216.9,779.8 2218.7,785.4 2220.6,788.0 2222.5,787.3 2224.3,791.0 2226.6,795.5 2228.8,800.3 2231.0,804.0 2232.5,817.1 2233.6,825.6 2234.8,802.2 2235.9,772.4 2237.0,753.0 2238.5,751.5 2240.0,755.6 2241.5,774.2 2243.3,779.8 2245.6,786.5 2247.8,788.0 2250.0,791.0 2252.3,791.7 2254.5,794.0 2255.6,772.4 2256.7,764.9 2258.2,762.3 2259.7,769.4 2261.6,770.5 2263.4,774.2 2264.9,783.5 2266.4,796.6 2267.5,772.4 2268.7,750.0 2270.1,737.0 2271.3,750.0 2272.8,744.4 2274.2,753.7 2275.7,761.2 2277.2,770.5 2278.7,756.7 2281.0,755.6 2283.2,757.5 2285.4,760.1 2287.7,762.3 2289.5,763.8 2291.4,759.3 2293.2,757.5 2294.7,751.5 2296.2,759.3 2298.1,761.2 2300.0,762.3 2301.4,754.5 2302.9,759.3 2304.8,757.5 2307.0,761.2 2309.3,763.1 2310.8,767.5 2312.6,766.8 2314.1,761.2 2315.6,762.3 2317.1,768.6 2318.6,777.2 2320.4,776.1 2322.3,777.2 2324.2,778.7 2325.7,775.4 2327.2,777.2 2329.0,774.2 2330.9,775.4 2332.7,768.6 2334.2,772.4 2336.1,776.1 2338.0,775.0 2339.8,777.2"/>
</svg></body></html>
